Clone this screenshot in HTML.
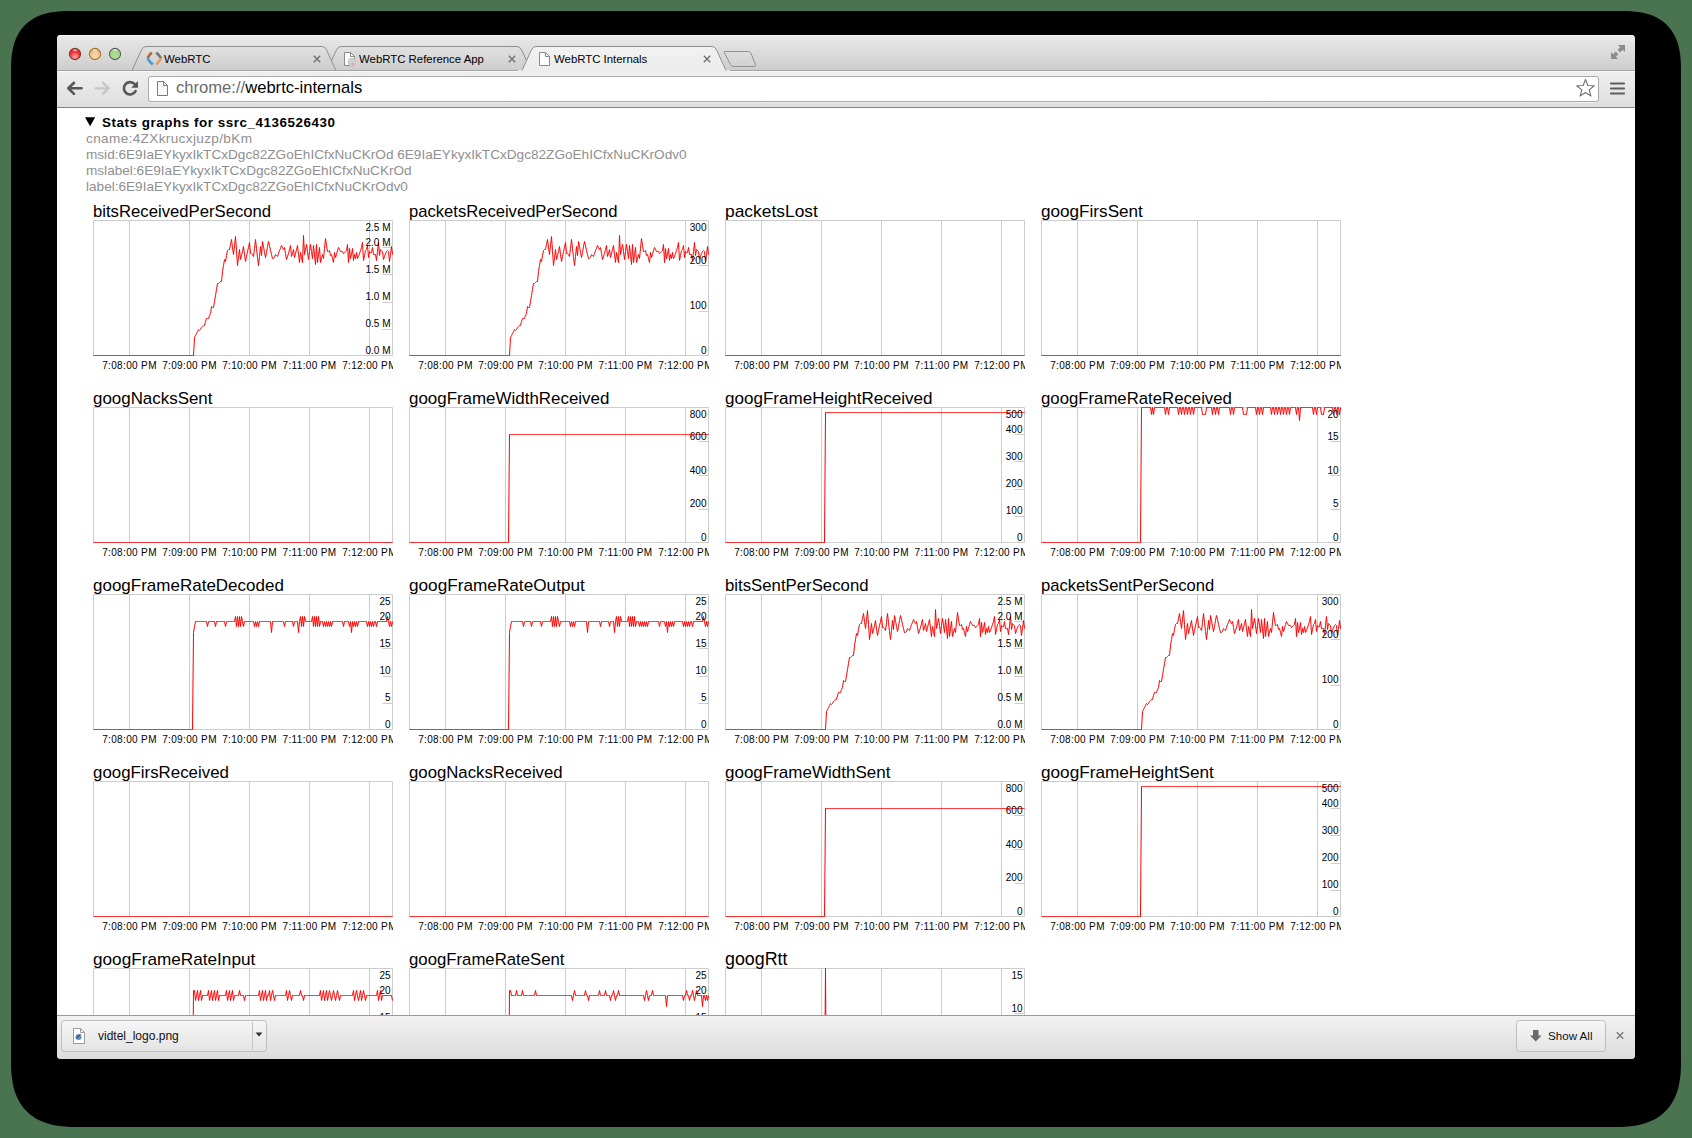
<!DOCTYPE html><html><head><meta charset="utf-8"><title>webrtc-internals</title><style>html,body{margin:0;padding:0}body{width:1692px;height:1138px;overflow:hidden;position:relative;background:#4a7450;font-family:"Liberation Sans",sans-serif}.abs{position:absolute}.t{position:absolute;white-space:nowrap;line-height:1}.gt{position:absolute;white-space:nowrap;font-size:16.5px;line-height:20px;color:#000}.gs{position:absolute;width:300px;height:150px}.gs svg{display:block}</style></head><body><svg class="abs" style="left:0;top:0" width="1692" height="1138"><path d="M1620.0,11.0 L1627.8,11.1 L1633.1,11.4 L1637.8,11.9 L1642.0,12.6 L1645.9,13.5 L1649.5,14.5 L1653.0,15.8 L1656.2,17.3 L1659.1,18.9 L1661.9,20.8 L1664.5,22.8 L1667.0,25.0 L1669.2,27.5 L1671.2,30.1 L1673.1,32.9 L1674.7,35.8 L1676.2,39.0 L1677.5,42.5 L1678.5,46.1 L1679.4,50.0 L1680.1,54.2 L1680.6,58.9 L1680.9,64.2 L1681.0,72.0 L1681.0,1059.0 L1680.9,1067.7 L1680.6,1073.6 L1680.0,1078.8 L1679.2,1083.5 L1678.3,1087.9 L1677.1,1091.9 L1675.6,1095.7 L1674.0,1099.3 L1672.2,1102.6 L1670.1,1105.8 L1667.8,1108.7 L1665.3,1111.3 L1662.7,1113.8 L1659.8,1116.1 L1656.6,1118.2 L1653.3,1120.0 L1649.7,1121.6 L1645.9,1123.1 L1641.9,1124.3 L1637.5,1125.2 L1632.8,1126.0 L1627.6,1126.6 L1621.7,1126.9 L1613.0,1127.0 L79.0,1127.0 L70.3,1126.9 L64.4,1126.6 L59.2,1126.0 L54.5,1125.2 L50.1,1124.3 L46.1,1123.1 L42.3,1121.6 L38.7,1120.0 L35.4,1118.2 L32.2,1116.1 L29.3,1113.8 L26.7,1111.3 L24.2,1108.7 L21.9,1105.8 L19.8,1102.6 L18.0,1099.3 L16.4,1095.7 L14.9,1091.9 L13.7,1087.9 L12.8,1083.5 L12.0,1078.8 L11.4,1073.6 L11.1,1067.7 L11.0,1059.0 L11.0,72.0 L11.1,64.2 L11.4,58.9 L11.9,54.2 L12.6,50.0 L13.5,46.1 L14.5,42.5 L15.8,39.0 L17.3,35.8 L18.9,32.9 L20.8,30.1 L22.8,27.5 L25.0,25.0 L27.5,22.8 L30.1,20.8 L32.9,18.9 L35.8,17.3 L39.0,15.8 L42.5,14.5 L46.1,13.5 L50.0,12.6 L54.2,11.9 L58.9,11.4 L64.2,11.1 L72.0,11.0Z" fill="#000"/></svg><div class="abs" style="left:57px;top:35px;width:1578px;height:1024px;border-radius:4px 4px 4px 4px;overflow:hidden;background:#fff"><div class="abs" style="left:0;top:0;width:1578px;height:36px;background:linear-gradient(#e9e9e9,#cdcdcd)"></div><div class="abs" style="left:0;top:0;width:1578px;height:1px;background:#f7f7f7"></div><div class="abs" style="left:0;top:36px;width:1578px;height:36px;background:linear-gradient(#efefef,#dedede)"></div><div class="abs" style="left:0;top:36px;width:1578px;height:1px;background:#f8f8f8"></div><div class="abs" style="left:0;top:72px;width:1578px;height:1px;background:#858585"></div><div class="abs" style="left:0;top:73px;width:1578px;height:907px;overflow:hidden;background:#fff"><svg class="abs" style="left:28px;top:9px" width="11" height="10"><path d="M0,0.2H10.2L5.1,9.3Z" fill="#000"/></svg><div class="t" style="left:45px;top:8px;font-size:13.4px;font-weight:bold;letter-spacing:0.55px;color:#000">Stats graphs for ssrc_4136526430</div><div class="t" style="left:29px;top:24px;font-size:13.6px;letter-spacing:0.35px;color:#8f8f8f">cname:4ZXkrucxjuzp/bKm</div><div class="t" style="left:29px;top:40px;font-size:13.6px;color:#8f8f8f">msid:6E9IaEYkyxIkTCxDgc82ZGoEhICfxNuCKrOd 6E9IaEYkyxIkTCxDgc82ZGoEhICfxNuCKrOdv0</div><div class="t" style="left:29px;top:56px;font-size:13.6px;color:#8f8f8f">mslabel:6E9IaEYkyxIkTCxDgc82ZGoEhICfxNuCKrOd</div><div class="t" style="left:29px;top:72px;font-size:13.6px;color:#8f8f8f">label:6E9IaEYkyxIkTCxDgc82ZGoEhICfxNuCKrOdv0</div><div class="gs" style="left:36px;top:112px"><svg width="300" height="150" viewBox="0 0 300 150"><rect width="300" height="150" fill="#fff"/><g font-family='"Liberation Sans", sans-serif' font-size="10" letter-spacing="0.35" fill="#000" text-anchor="middle"><text x="36.5" y="149">7:08:00 PM</text><text x="96.5" y="149">7:09:00 PM</text><text x="156.5" y="149">7:10:00 PM</text><text x="216.5" y="149">7:11:00 PM</text><text x="276.5" y="149">7:12:00 PM</text></g><path d="M36.5,0.5V135.5 M96.5,0.5V135.5 M156.5,0.5V135.5 M216.5,0.5V135.5 M276.5,0.5V135.5 M0.5,0.5H299.5V135.5H0.5Z M299.5,27.5H289.5 M299.5,54.5H289.5 M299.5,82.5H289.5 M299.5,109.5H289.5" fill="none" stroke="#ccc" stroke-width="1"/><polyline points="0.5,135.5 1.5,135.5 2.5,135.5 3.5,135.5 4.5,135.5 5.5,135.5 6.5,135.5 7.5,135.5 8.5,135.5 9.5,135.5 10.5,135.5 11.5,135.5 12.5,135.5 13.5,135.5 14.5,135.5 15.5,135.5 16.5,135.5 17.5,135.5 18.5,135.5 19.5,135.5 20.5,135.5 21.5,135.5 22.5,135.5 23.5,135.5 24.5,135.5 25.5,135.5 26.5,135.5 27.5,135.5 28.5,135.5 29.5,135.5 30.5,135.5 31.5,135.5 32.5,135.5 33.5,135.5 34.5,135.5 35.5,135.5 36.5,135.5 37.5,135.5 38.5,135.5 39.5,135.5 40.5,135.5 41.5,135.5 42.5,135.5 43.5,135.5 44.5,135.5 45.5,135.5 46.5,135.5 47.5,135.5 48.5,135.5 49.5,135.5 50.5,135.5 51.5,135.5 52.5,135.5 53.5,135.5 54.5,135.5 55.5,135.5 56.5,135.5 57.5,135.5 58.5,135.5 59.5,135.5 60.5,135.5 61.5,135.5 62.5,135.5 63.5,135.5 64.5,135.5 65.5,135.5 66.5,135.5 67.5,135.5 68.5,135.5 69.5,135.5 70.5,135.5 71.5,135.5 72.5,135.5 73.5,135.5 74.5,135.5 75.5,135.5 76.5,135.5 77.5,135.5 78.5,135.5 79.5,135.5 80.5,135.5 81.5,135.5 82.5,135.5 83.5,135.5 84.5,135.5 85.5,135.5 86.5,135.5 87.5,135.5 88.5,135.5 89.5,135.5 90.5,135.5 91.5,135.5 92.5,135.5 93.5,135.5 94.5,135.5 95.5,135.5 96.5,135.5 97.5,135.5 98.5,135.5 99.5,135.5 100.5,135.5 101.5,117.5 102.5,115.5 103.5,113.5 104.5,111.5 105.5,109.5 106.5,110.5 107.5,109.5 108.5,107.5 109.5,106.5 110.5,105.5 111.5,105.5 112.5,101.5 113.5,98.5 114.5,98.5 115.5,98.5 116.5,95.5 117.5,93.5 118.5,86.5 119.5,87.5 120.5,87.5 121.5,81.5 122.5,75.5 123.5,69.5 124.5,63.5 125.5,63.5 126.5,62.5 127.5,61.5 128.5,61.5 129.5,51.5 130.5,45.5 131.5,39.5 132.5,41.5 133.5,35.5 134.5,30.5 135.5,29.5 136.5,29.5 137.5,24.5 138.5,19.5 139.5,27.5 140.5,34.5 141.5,25.5 142.5,16.5 143.5,30.5 144.5,45.5 145.5,37.5 146.5,29.5 147.5,39.5 148.5,35.5 149.5,31.5 150.5,26.5 151.5,34.5 152.5,41.5 153.5,36.5 154.5,31.5 155.5,27.5 156.5,22.5 157.5,33.5 158.5,33.5 159.5,34.5 160.5,36.5 161.5,28.5 162.5,19.5 163.5,28.5 164.5,37.5 165.5,45.5 166.5,36.5 167.5,26.5 168.5,35.5 169.5,21.5 170.5,26.5 171.5,32.5 172.5,37.5 173.5,32.5 174.5,26.5 175.5,21.5 176.5,25.5 177.5,30.5 178.5,34.5 179.5,38.5 180.5,38.5 181.5,37.5 182.5,34.5 183.5,35.5 184.5,36.5 185.5,33.5 186.5,30.5 187.5,28.5 188.5,25.5 189.5,27.5 190.5,29.5 191.5,27.5 192.5,33.5 193.5,39.5 194.5,36.5 195.5,33.5 196.5,29.5 197.5,25.5 198.5,36.5 199.5,33.5 200.5,29.5 201.5,37.5 202.5,33.5 203.5,29.5 204.5,25.5 205.5,34.5 206.5,42.5 207.5,32.5 208.5,37.5 209.5,42.5 210.5,15.5 211.5,34.5 212.5,29.5 213.5,24.5 214.5,31.5 215.5,39.5 216.5,31.5 217.5,24.5 218.5,31.5 219.5,38.5 220.5,25.5 221.5,34.5 222.5,44.5 223.5,24.5 224.5,42.5 225.5,34.5 226.5,27.5 227.5,42.5 228.5,38.5 229.5,34.5 230.5,38.5 231.5,28.5 232.5,18.5 233.5,25.5 234.5,31.5 235.5,31.5 236.5,30.5 237.5,35.5 238.5,34.5 239.5,38.5 240.5,42.5 241.5,32.5 242.5,37.5 243.5,34.5 244.5,30.5 245.5,27.5 246.5,29.5 247.5,31.5 248.5,31.5 249.5,31.5 250.5,33.5 251.5,32.5 252.5,31.5 253.5,30.5 254.5,24.5 255.5,42.5 256.5,28.5 257.5,38.5 258.5,34.5 259.5,28.5 260.5,40.5 261.5,34.5 262.5,38.5 263.5,32.5 264.5,38.5 265.5,36.5 266.5,33.5 267.5,30.5 268.5,27.5 269.5,22.5 270.5,40.5 271.5,35.5 272.5,30.5 273.5,29.5 274.5,25.5 275.5,37.5 276.5,31.5 277.5,32.5 278.5,32.5 279.5,27.5 280.5,34.5 281.5,34.5 282.5,34.5 283.5,40.5 284.5,31.5 285.5,22.5 286.5,35.5 287.5,29.5 288.5,30.5 289.5,31.5 290.5,39.5 291.5,36.5 292.5,33.5 293.5,31.5 294.5,30.5 295.5,31.5 296.5,41.5 297.5,34.5 298.5,26.5 299.5,34.5" fill="none" stroke="#f00" stroke-width="1" stroke-linejoin="miter"/><g font-family='"Liberation Sans", sans-serif' font-size="10" fill="#000" text-anchor="end"><text x="297.5" y="11">2.5 M</text><text x="297.5" y="26.00">2.0 M</text><text x="297.5" y="53.00">1.5 M</text><text x="297.5" y="80.00">1.0 M</text><text x="297.5" y="107.00">0.5 M</text><text x="297.5" y="134.00">0.0 M</text></g></svg></div><div class="gs" style="left:352px;top:112px"><svg width="300" height="150" viewBox="0 0 300 150"><rect width="300" height="150" fill="#fff"/><g font-family='"Liberation Sans", sans-serif' font-size="10" letter-spacing="0.35" fill="#000" text-anchor="middle"><text x="36.5" y="149">7:08:00 PM</text><text x="96.5" y="149">7:09:00 PM</text><text x="156.5" y="149">7:10:00 PM</text><text x="216.5" y="149">7:11:00 PM</text><text x="276.5" y="149">7:12:00 PM</text></g><path d="M36.5,0.5V135.5 M96.5,0.5V135.5 M156.5,0.5V135.5 M216.5,0.5V135.5 M276.5,0.5V135.5 M0.5,0.5H299.5V135.5H0.5Z M299.5,45.5H289.5 M299.5,91.5H289.5" fill="none" stroke="#ccc" stroke-width="1"/><polyline points="0.5,135.5 1.5,135.5 2.5,135.5 3.5,135.5 4.5,135.5 5.5,135.5 6.5,135.5 7.5,135.5 8.5,135.5 9.5,135.5 10.5,135.5 11.5,135.5 12.5,135.5 13.5,135.5 14.5,135.5 15.5,135.5 16.5,135.5 17.5,135.5 18.5,135.5 19.5,135.5 20.5,135.5 21.5,135.5 22.5,135.5 23.5,135.5 24.5,135.5 25.5,135.5 26.5,135.5 27.5,135.5 28.5,135.5 29.5,135.5 30.5,135.5 31.5,135.5 32.5,135.5 33.5,135.5 34.5,135.5 35.5,135.5 36.5,135.5 37.5,135.5 38.5,135.5 39.5,135.5 40.5,135.5 41.5,135.5 42.5,135.5 43.5,135.5 44.5,135.5 45.5,135.5 46.5,135.5 47.5,135.5 48.5,135.5 49.5,135.5 50.5,135.5 51.5,135.5 52.5,135.5 53.5,135.5 54.5,135.5 55.5,135.5 56.5,135.5 57.5,135.5 58.5,135.5 59.5,135.5 60.5,135.5 61.5,135.5 62.5,135.5 63.5,135.5 64.5,135.5 65.5,135.5 66.5,135.5 67.5,135.5 68.5,135.5 69.5,135.5 70.5,135.5 71.5,135.5 72.5,135.5 73.5,135.5 74.5,135.5 75.5,135.5 76.5,135.5 77.5,135.5 78.5,135.5 79.5,135.5 80.5,135.5 81.5,135.5 82.5,135.5 83.5,135.5 84.5,135.5 85.5,135.5 86.5,135.5 87.5,135.5 88.5,135.5 89.5,135.5 90.5,135.5 91.5,135.5 92.5,135.5 93.5,135.5 94.5,135.5 95.5,135.5 96.5,135.5 97.5,135.5 98.5,135.5 99.5,135.5 100.5,135.5 101.5,117.5 102.5,115.5 103.5,113.5 104.5,111.5 105.5,109.5 106.5,110.5 107.5,109.5 108.5,107.5 109.5,106.5 110.5,105.5 111.5,105.5 112.5,101.5 113.5,98.5 114.5,98.5 115.5,98.5 116.5,95.5 117.5,93.5 118.5,86.5 119.5,87.5 120.5,87.5 121.5,81.5 122.5,75.5 123.5,69.5 124.5,63.5 125.5,63.5 126.5,62.5 127.5,61.5 128.5,61.5 129.5,51.5 130.5,45.5 131.5,39.5 132.5,41.5 133.5,35.5 134.5,30.5 135.5,29.5 136.5,29.5 137.5,24.5 138.5,19.5 139.5,27.5 140.5,34.5 141.5,25.5 142.5,16.5 143.5,30.5 144.5,45.5 145.5,37.5 146.5,29.5 147.5,39.5 148.5,35.5 149.5,31.5 150.5,26.5 151.5,34.5 152.5,41.5 153.5,36.5 154.5,31.5 155.5,27.5 156.5,22.5 157.5,33.5 158.5,33.5 159.5,34.5 160.5,36.5 161.5,28.5 162.5,19.5 163.5,28.5 164.5,37.5 165.5,45.5 166.5,36.5 167.5,26.5 168.5,35.5 169.5,21.5 170.5,26.5 171.5,32.5 172.5,37.5 173.5,32.5 174.5,26.5 175.5,21.5 176.5,25.5 177.5,30.5 178.5,34.5 179.5,38.5 180.5,38.5 181.5,37.5 182.5,34.5 183.5,35.5 184.5,36.5 185.5,33.5 186.5,30.5 187.5,28.5 188.5,25.5 189.5,27.5 190.5,29.5 191.5,27.5 192.5,33.5 193.5,39.5 194.5,36.5 195.5,33.5 196.5,29.5 197.5,25.5 198.5,36.5 199.5,33.5 200.5,29.5 201.5,37.5 202.5,33.5 203.5,29.5 204.5,25.5 205.5,34.5 206.5,42.5 207.5,32.5 208.5,37.5 209.5,42.5 210.5,15.5 211.5,34.5 212.5,29.5 213.5,24.5 214.5,31.5 215.5,39.5 216.5,31.5 217.5,24.5 218.5,31.5 219.5,38.5 220.5,25.5 221.5,34.5 222.5,44.5 223.5,24.5 224.5,42.5 225.5,34.5 226.5,27.5 227.5,42.5 228.5,38.5 229.5,34.5 230.5,38.5 231.5,28.5 232.5,18.5 233.5,25.5 234.5,31.5 235.5,31.5 236.5,30.5 237.5,35.5 238.5,34.5 239.5,38.5 240.5,42.5 241.5,32.5 242.5,37.5 243.5,34.5 244.5,30.5 245.5,27.5 246.5,29.5 247.5,31.5 248.5,31.5 249.5,31.5 250.5,33.5 251.5,32.5 252.5,31.5 253.5,30.5 254.5,24.5 255.5,42.5 256.5,28.5 257.5,38.5 258.5,34.5 259.5,28.5 260.5,40.5 261.5,34.5 262.5,38.5 263.5,32.5 264.5,38.5 265.5,36.5 266.5,33.5 267.5,30.5 268.5,27.5 269.5,22.5 270.5,40.5 271.5,35.5 272.5,30.5 273.5,29.5 274.5,25.5 275.5,37.5 276.5,31.5 277.5,32.5 278.5,32.5 279.5,27.5 280.5,34.5 281.5,34.5 282.5,34.5 283.5,40.5 284.5,31.5 285.5,22.5 286.5,35.5 287.5,29.5 288.5,30.5 289.5,31.5 290.5,39.5 291.5,36.5 292.5,33.5 293.5,31.5 294.5,30.5 295.5,31.5 296.5,41.5 297.5,34.5 298.5,26.5 299.5,34.5" fill="none" stroke="#f00" stroke-width="1" stroke-linejoin="miter"/><g font-family='"Liberation Sans", sans-serif' font-size="10" fill="#000" text-anchor="end"><text x="297.5" y="11">300</text><text x="297.5" y="44.00">200</text><text x="297.5" y="89.00">100</text><text x="297.5" y="134.00">0</text></g></svg></div><div class="gs" style="left:668px;top:112px"><svg width="300" height="150" viewBox="0 0 300 150"><rect width="300" height="150" fill="#fff"/><g font-family='"Liberation Sans", sans-serif' font-size="10" letter-spacing="0.35" fill="#000" text-anchor="middle"><text x="36.5" y="149">7:08:00 PM</text><text x="96.5" y="149">7:09:00 PM</text><text x="156.5" y="149">7:10:00 PM</text><text x="216.5" y="149">7:11:00 PM</text><text x="276.5" y="149">7:12:00 PM</text></g><path d="M36.5,0.5V135.5 M96.5,0.5V135.5 M156.5,0.5V135.5 M216.5,0.5V135.5 M276.5,0.5V135.5 M0.5,0.5H299.5V135.5H0.5Z" fill="none" stroke="#ccc" stroke-width="1"/><polyline points="0.5,135.5 1.5,135.5 2.5,135.5 3.5,135.5 4.5,135.5 5.5,135.5 6.5,135.5 7.5,135.5 8.5,135.5 9.5,135.5 10.5,135.5 11.5,135.5 12.5,135.5 13.5,135.5 14.5,135.5 15.5,135.5 16.5,135.5 17.5,135.5 18.5,135.5 19.5,135.5 20.5,135.5 21.5,135.5 22.5,135.5 23.5,135.5 24.5,135.5 25.5,135.5 26.5,135.5 27.5,135.5 28.5,135.5 29.5,135.5 30.5,135.5 31.5,135.5 32.5,135.5 33.5,135.5 34.5,135.5 35.5,135.5 36.5,135.5 37.5,135.5 38.5,135.5 39.5,135.5 40.5,135.5 41.5,135.5 42.5,135.5 43.5,135.5 44.5,135.5 45.5,135.5 46.5,135.5 47.5,135.5 48.5,135.5 49.5,135.5 50.5,135.5 51.5,135.5 52.5,135.5 53.5,135.5 54.5,135.5 55.5,135.5 56.5,135.5 57.5,135.5 58.5,135.5 59.5,135.5 60.5,135.5 61.5,135.5 62.5,135.5 63.5,135.5 64.5,135.5 65.5,135.5 66.5,135.5 67.5,135.5 68.5,135.5 69.5,135.5 70.5,135.5 71.5,135.5 72.5,135.5 73.5,135.5 74.5,135.5 75.5,135.5 76.5,135.5 77.5,135.5 78.5,135.5 79.5,135.5 80.5,135.5 81.5,135.5 82.5,135.5 83.5,135.5 84.5,135.5 85.5,135.5 86.5,135.5 87.5,135.5 88.5,135.5 89.5,135.5 90.5,135.5 91.5,135.5 92.5,135.5 93.5,135.5 94.5,135.5 95.5,135.5 96.5,135.5 97.5,135.5 98.5,135.5 99.5,135.5 100.5,135.5 101.5,135.5 102.5,135.5 103.5,135.5 104.5,135.5 105.5,135.5 106.5,135.5 107.5,135.5 108.5,135.5 109.5,135.5 110.5,135.5 111.5,135.5 112.5,135.5 113.5,135.5 114.5,135.5 115.5,135.5 116.5,135.5 117.5,135.5 118.5,135.5 119.5,135.5 120.5,135.5 121.5,135.5 122.5,135.5 123.5,135.5 124.5,135.5 125.5,135.5 126.5,135.5 127.5,135.5 128.5,135.5 129.5,135.5 130.5,135.5 131.5,135.5 132.5,135.5 133.5,135.5 134.5,135.5 135.5,135.5 136.5,135.5 137.5,135.5 138.5,135.5 139.5,135.5 140.5,135.5 141.5,135.5 142.5,135.5 143.5,135.5 144.5,135.5 145.5,135.5 146.5,135.5 147.5,135.5 148.5,135.5 149.5,135.5 150.5,135.5 151.5,135.5 152.5,135.5 153.5,135.5 154.5,135.5 155.5,135.5 156.5,135.5 157.5,135.5 158.5,135.5 159.5,135.5 160.5,135.5 161.5,135.5 162.5,135.5 163.5,135.5 164.5,135.5 165.5,135.5 166.5,135.5 167.5,135.5 168.5,135.5 169.5,135.5 170.5,135.5 171.5,135.5 172.5,135.5 173.5,135.5 174.5,135.5 175.5,135.5 176.5,135.5 177.5,135.5 178.5,135.5 179.5,135.5 180.5,135.5 181.5,135.5 182.5,135.5 183.5,135.5 184.5,135.5 185.5,135.5 186.5,135.5 187.5,135.5 188.5,135.5 189.5,135.5 190.5,135.5 191.5,135.5 192.5,135.5 193.5,135.5 194.5,135.5 195.5,135.5 196.5,135.5 197.5,135.5 198.5,135.5 199.5,135.5 200.5,135.5 201.5,135.5 202.5,135.5 203.5,135.5 204.5,135.5 205.5,135.5 206.5,135.5 207.5,135.5 208.5,135.5 209.5,135.5 210.5,135.5 211.5,135.5 212.5,135.5 213.5,135.5 214.5,135.5 215.5,135.5 216.5,135.5 217.5,135.5 218.5,135.5 219.5,135.5 220.5,135.5 221.5,135.5 222.5,135.5 223.5,135.5 224.5,135.5 225.5,135.5 226.5,135.5 227.5,135.5 228.5,135.5 229.5,135.5 230.5,135.5 231.5,135.5 232.5,135.5 233.5,135.5 234.5,135.5 235.5,135.5 236.5,135.5 237.5,135.5 238.5,135.5 239.5,135.5 240.5,135.5 241.5,135.5 242.5,135.5 243.5,135.5 244.5,135.5 245.5,135.5 246.5,135.5 247.5,135.5 248.5,135.5 249.5,135.5 250.5,135.5 251.5,135.5 252.5,135.5 253.5,135.5 254.5,135.5 255.5,135.5 256.5,135.5 257.5,135.5 258.5,135.5 259.5,135.5 260.5,135.5 261.5,135.5 262.5,135.5 263.5,135.5 264.5,135.5 265.5,135.5 266.5,135.5 267.5,135.5 268.5,135.5 269.5,135.5 270.5,135.5 271.5,135.5 272.5,135.5 273.5,135.5 274.5,135.5 275.5,135.5 276.5,135.5 277.5,135.5 278.5,135.5 279.5,135.5 280.5,135.5 281.5,135.5 282.5,135.5 283.5,135.5 284.5,135.5 285.5,135.5 286.5,135.5 287.5,135.5 288.5,135.5 289.5,135.5 290.5,135.5 291.5,135.5 292.5,135.5 293.5,135.5 294.5,135.5 295.5,135.5 296.5,135.5 297.5,135.5 298.5,135.5 299.5,135.5" fill="none" stroke="#f00" stroke-width="1" stroke-linejoin="miter"/></svg></div><div class="gs" style="left:984px;top:112px"><svg width="300" height="150" viewBox="0 0 300 150"><rect width="300" height="150" fill="#fff"/><g font-family='"Liberation Sans", sans-serif' font-size="10" letter-spacing="0.35" fill="#000" text-anchor="middle"><text x="36.5" y="149">7:08:00 PM</text><text x="96.5" y="149">7:09:00 PM</text><text x="156.5" y="149">7:10:00 PM</text><text x="216.5" y="149">7:11:00 PM</text><text x="276.5" y="149">7:12:00 PM</text></g><path d="M36.5,0.5V135.5 M96.5,0.5V135.5 M156.5,0.5V135.5 M216.5,0.5V135.5 M276.5,0.5V135.5 M0.5,0.5H299.5V135.5H0.5Z" fill="none" stroke="#ccc" stroke-width="1"/><polyline points="0.5,135.5 1.5,135.5 2.5,135.5 3.5,135.5 4.5,135.5 5.5,135.5 6.5,135.5 7.5,135.5 8.5,135.5 9.5,135.5 10.5,135.5 11.5,135.5 12.5,135.5 13.5,135.5 14.5,135.5 15.5,135.5 16.5,135.5 17.5,135.5 18.5,135.5 19.5,135.5 20.5,135.5 21.5,135.5 22.5,135.5 23.5,135.5 24.5,135.5 25.5,135.5 26.5,135.5 27.5,135.5 28.5,135.5 29.5,135.5 30.5,135.5 31.5,135.5 32.5,135.5 33.5,135.5 34.5,135.5 35.5,135.5 36.5,135.5 37.5,135.5 38.5,135.5 39.5,135.5 40.5,135.5 41.5,135.5 42.5,135.5 43.5,135.5 44.5,135.5 45.5,135.5 46.5,135.5 47.5,135.5 48.5,135.5 49.5,135.5 50.5,135.5 51.5,135.5 52.5,135.5 53.5,135.5 54.5,135.5 55.5,135.5 56.5,135.5 57.5,135.5 58.5,135.5 59.5,135.5 60.5,135.5 61.5,135.5 62.5,135.5 63.5,135.5 64.5,135.5 65.5,135.5 66.5,135.5 67.5,135.5 68.5,135.5 69.5,135.5 70.5,135.5 71.5,135.5 72.5,135.5 73.5,135.5 74.5,135.5 75.5,135.5 76.5,135.5 77.5,135.5 78.5,135.5 79.5,135.5 80.5,135.5 81.5,135.5 82.5,135.5 83.5,135.5 84.5,135.5 85.5,135.5 86.5,135.5 87.5,135.5 88.5,135.5 89.5,135.5 90.5,135.5 91.5,135.5 92.5,135.5 93.5,135.5 94.5,135.5 95.5,135.5 96.5,135.5 97.5,135.5 98.5,135.5 99.5,135.5 100.5,135.5 101.5,135.5 102.5,135.5 103.5,135.5 104.5,135.5 105.5,135.5 106.5,135.5 107.5,135.5 108.5,135.5 109.5,135.5 110.5,135.5 111.5,135.5 112.5,135.5 113.5,135.5 114.5,135.5 115.5,135.5 116.5,135.5 117.5,135.5 118.5,135.5 119.5,135.5 120.5,135.5 121.5,135.5 122.5,135.5 123.5,135.5 124.5,135.5 125.5,135.5 126.5,135.5 127.5,135.5 128.5,135.5 129.5,135.5 130.5,135.5 131.5,135.5 132.5,135.5 133.5,135.5 134.5,135.5 135.5,135.5 136.5,135.5 137.5,135.5 138.5,135.5 139.5,135.5 140.5,135.5 141.5,135.5 142.5,135.5 143.5,135.5 144.5,135.5 145.5,135.5 146.5,135.5 147.5,135.5 148.5,135.5 149.5,135.5 150.5,135.5 151.5,135.5 152.5,135.5 153.5,135.5 154.5,135.5 155.5,135.5 156.5,135.5 157.5,135.5 158.5,135.5 159.5,135.5 160.5,135.5 161.5,135.5 162.5,135.5 163.5,135.5 164.5,135.5 165.5,135.5 166.5,135.5 167.5,135.5 168.5,135.5 169.5,135.5 170.5,135.5 171.5,135.5 172.5,135.5 173.5,135.5 174.5,135.5 175.5,135.5 176.5,135.5 177.5,135.5 178.5,135.5 179.5,135.5 180.5,135.5 181.5,135.5 182.5,135.5 183.5,135.5 184.5,135.5 185.5,135.5 186.5,135.5 187.5,135.5 188.5,135.5 189.5,135.5 190.5,135.5 191.5,135.5 192.5,135.5 193.5,135.5 194.5,135.5 195.5,135.5 196.5,135.5 197.5,135.5 198.5,135.5 199.5,135.5 200.5,135.5 201.5,135.5 202.5,135.5 203.5,135.5 204.5,135.5 205.5,135.5 206.5,135.5 207.5,135.5 208.5,135.5 209.5,135.5 210.5,135.5 211.5,135.5 212.5,135.5 213.5,135.5 214.5,135.5 215.5,135.5 216.5,135.5 217.5,135.5 218.5,135.5 219.5,135.5 220.5,135.5 221.5,135.5 222.5,135.5 223.5,135.5 224.5,135.5 225.5,135.5 226.5,135.5 227.5,135.5 228.5,135.5 229.5,135.5 230.5,135.5 231.5,135.5 232.5,135.5 233.5,135.5 234.5,135.5 235.5,135.5 236.5,135.5 237.5,135.5 238.5,135.5 239.5,135.5 240.5,135.5 241.5,135.5 242.5,135.5 243.5,135.5 244.5,135.5 245.5,135.5 246.5,135.5 247.5,135.5 248.5,135.5 249.5,135.5 250.5,135.5 251.5,135.5 252.5,135.5 253.5,135.5 254.5,135.5 255.5,135.5 256.5,135.5 257.5,135.5 258.5,135.5 259.5,135.5 260.5,135.5 261.5,135.5 262.5,135.5 263.5,135.5 264.5,135.5 265.5,135.5 266.5,135.5 267.5,135.5 268.5,135.5 269.5,135.5 270.5,135.5 271.5,135.5 272.5,135.5 273.5,135.5 274.5,135.5 275.5,135.5 276.5,135.5 277.5,135.5 278.5,135.5 279.5,135.5 280.5,135.5 281.5,135.5 282.5,135.5 283.5,135.5 284.5,135.5 285.5,135.5 286.5,135.5 287.5,135.5 288.5,135.5 289.5,135.5 290.5,135.5 291.5,135.5 292.5,135.5 293.5,135.5 294.5,135.5 295.5,135.5 296.5,135.5 297.5,135.5 298.5,135.5 299.5,135.5" fill="none" stroke="#f00" stroke-width="1" stroke-linejoin="miter"/></svg></div><div class="gs" style="left:36px;top:299px"><svg width="300" height="150" viewBox="0 0 300 150"><rect width="300" height="150" fill="#fff"/><g font-family='"Liberation Sans", sans-serif' font-size="10" letter-spacing="0.35" fill="#000" text-anchor="middle"><text x="36.5" y="149">7:08:00 PM</text><text x="96.5" y="149">7:09:00 PM</text><text x="156.5" y="149">7:10:00 PM</text><text x="216.5" y="149">7:11:00 PM</text><text x="276.5" y="149">7:12:00 PM</text></g><path d="M36.5,0.5V135.5 M96.5,0.5V135.5 M156.5,0.5V135.5 M216.5,0.5V135.5 M276.5,0.5V135.5 M0.5,0.5H299.5V135.5H0.5Z" fill="none" stroke="#ccc" stroke-width="1"/><polyline points="0.5,135.5 1.5,135.5 2.5,135.5 3.5,135.5 4.5,135.5 5.5,135.5 6.5,135.5 7.5,135.5 8.5,135.5 9.5,135.5 10.5,135.5 11.5,135.5 12.5,135.5 13.5,135.5 14.5,135.5 15.5,135.5 16.5,135.5 17.5,135.5 18.5,135.5 19.5,135.5 20.5,135.5 21.5,135.5 22.5,135.5 23.5,135.5 24.5,135.5 25.5,135.5 26.5,135.5 27.5,135.5 28.5,135.5 29.5,135.5 30.5,135.5 31.5,135.5 32.5,135.5 33.5,135.5 34.5,135.5 35.5,135.5 36.5,135.5 37.5,135.5 38.5,135.5 39.5,135.5 40.5,135.5 41.5,135.5 42.5,135.5 43.5,135.5 44.5,135.5 45.5,135.5 46.5,135.5 47.5,135.5 48.5,135.5 49.5,135.5 50.5,135.5 51.5,135.5 52.5,135.5 53.5,135.5 54.5,135.5 55.5,135.5 56.5,135.5 57.5,135.5 58.5,135.5 59.5,135.5 60.5,135.5 61.5,135.5 62.5,135.5 63.5,135.5 64.5,135.5 65.5,135.5 66.5,135.5 67.5,135.5 68.5,135.5 69.5,135.5 70.5,135.5 71.5,135.5 72.5,135.5 73.5,135.5 74.5,135.5 75.5,135.5 76.5,135.5 77.5,135.5 78.5,135.5 79.5,135.5 80.5,135.5 81.5,135.5 82.5,135.5 83.5,135.5 84.5,135.5 85.5,135.5 86.5,135.5 87.5,135.5 88.5,135.5 89.5,135.5 90.5,135.5 91.5,135.5 92.5,135.5 93.5,135.5 94.5,135.5 95.5,135.5 96.5,135.5 97.5,135.5 98.5,135.5 99.5,135.5 100.5,135.5 101.5,135.5 102.5,135.5 103.5,135.5 104.5,135.5 105.5,135.5 106.5,135.5 107.5,135.5 108.5,135.5 109.5,135.5 110.5,135.5 111.5,135.5 112.5,135.5 113.5,135.5 114.5,135.5 115.5,135.5 116.5,135.5 117.5,135.5 118.5,135.5 119.5,135.5 120.5,135.5 121.5,135.5 122.5,135.5 123.5,135.5 124.5,135.5 125.5,135.5 126.5,135.5 127.5,135.5 128.5,135.5 129.5,135.5 130.5,135.5 131.5,135.5 132.5,135.5 133.5,135.5 134.5,135.5 135.5,135.5 136.5,135.5 137.5,135.5 138.5,135.5 139.5,135.5 140.5,135.5 141.5,135.5 142.5,135.5 143.5,135.5 144.5,135.5 145.5,135.5 146.5,135.5 147.5,135.5 148.5,135.5 149.5,135.5 150.5,135.5 151.5,135.5 152.5,135.5 153.5,135.5 154.5,135.5 155.5,135.5 156.5,135.5 157.5,135.5 158.5,135.5 159.5,135.5 160.5,135.5 161.5,135.5 162.5,135.5 163.5,135.5 164.5,135.5 165.5,135.5 166.5,135.5 167.5,135.5 168.5,135.5 169.5,135.5 170.5,135.5 171.5,135.5 172.5,135.5 173.5,135.5 174.5,135.5 175.5,135.5 176.5,135.5 177.5,135.5 178.5,135.5 179.5,135.5 180.5,135.5 181.5,135.5 182.5,135.5 183.5,135.5 184.5,135.5 185.5,135.5 186.5,135.5 187.5,135.5 188.5,135.5 189.5,135.5 190.5,135.5 191.5,135.5 192.5,135.5 193.5,135.5 194.5,135.5 195.5,135.5 196.5,135.5 197.5,135.5 198.5,135.5 199.5,135.5 200.5,135.5 201.5,135.5 202.5,135.5 203.5,135.5 204.5,135.5 205.5,135.5 206.5,135.5 207.5,135.5 208.5,135.5 209.5,135.5 210.5,135.5 211.5,135.5 212.5,135.5 213.5,135.5 214.5,135.5 215.5,135.5 216.5,135.5 217.5,135.5 218.5,135.5 219.5,135.5 220.5,135.5 221.5,135.5 222.5,135.5 223.5,135.5 224.5,135.5 225.5,135.5 226.5,135.5 227.5,135.5 228.5,135.5 229.5,135.5 230.5,135.5 231.5,135.5 232.5,135.5 233.5,135.5 234.5,135.5 235.5,135.5 236.5,135.5 237.5,135.5 238.5,135.5 239.5,135.5 240.5,135.5 241.5,135.5 242.5,135.5 243.5,135.5 244.5,135.5 245.5,135.5 246.5,135.5 247.5,135.5 248.5,135.5 249.5,135.5 250.5,135.5 251.5,135.5 252.5,135.5 253.5,135.5 254.5,135.5 255.5,135.5 256.5,135.5 257.5,135.5 258.5,135.5 259.5,135.5 260.5,135.5 261.5,135.5 262.5,135.5 263.5,135.5 264.5,135.5 265.5,135.5 266.5,135.5 267.5,135.5 268.5,135.5 269.5,135.5 270.5,135.5 271.5,135.5 272.5,135.5 273.5,135.5 274.5,135.5 275.5,135.5 276.5,135.5 277.5,135.5 278.5,135.5 279.5,135.5 280.5,135.5 281.5,135.5 282.5,135.5 283.5,135.5 284.5,135.5 285.5,135.5 286.5,135.5 287.5,135.5 288.5,135.5 289.5,135.5 290.5,135.5 291.5,135.5 292.5,135.5 293.5,135.5 294.5,135.5 295.5,135.5 296.5,135.5 297.5,135.5 298.5,135.5 299.5,135.5" fill="none" stroke="#f00" stroke-width="1" stroke-linejoin="miter"/></svg></div><div class="gs" style="left:352px;top:299px"><svg width="300" height="150" viewBox="0 0 300 150"><rect width="300" height="150" fill="#fff"/><g font-family='"Liberation Sans", sans-serif' font-size="10" letter-spacing="0.35" fill="#000" text-anchor="middle"><text x="36.5" y="149">7:08:00 PM</text><text x="96.5" y="149">7:09:00 PM</text><text x="156.5" y="149">7:10:00 PM</text><text x="216.5" y="149">7:11:00 PM</text><text x="276.5" y="149">7:12:00 PM</text></g><path d="M36.5,0.5V135.5 M96.5,0.5V135.5 M156.5,0.5V135.5 M216.5,0.5V135.5 M276.5,0.5V135.5 M0.5,0.5H299.5V135.5H0.5Z M299.5,34.5H289.5 M299.5,68.5H289.5 M299.5,102.5H289.5" fill="none" stroke="#ccc" stroke-width="1"/><polyline points="0.5,135.5 1.5,135.5 2.5,135.5 3.5,135.5 4.5,135.5 5.5,135.5 6.5,135.5 7.5,135.5 8.5,135.5 9.5,135.5 10.5,135.5 11.5,135.5 12.5,135.5 13.5,135.5 14.5,135.5 15.5,135.5 16.5,135.5 17.5,135.5 18.5,135.5 19.5,135.5 20.5,135.5 21.5,135.5 22.5,135.5 23.5,135.5 24.5,135.5 25.5,135.5 26.5,135.5 27.5,135.5 28.5,135.5 29.5,135.5 30.5,135.5 31.5,135.5 32.5,135.5 33.5,135.5 34.5,135.5 35.5,135.5 36.5,135.5 37.5,135.5 38.5,135.5 39.5,135.5 40.5,135.5 41.5,135.5 42.5,135.5 43.5,135.5 44.5,135.5 45.5,135.5 46.5,135.5 47.5,135.5 48.5,135.5 49.5,135.5 50.5,135.5 51.5,135.5 52.5,135.5 53.5,135.5 54.5,135.5 55.5,135.5 56.5,135.5 57.5,135.5 58.5,135.5 59.5,135.5 60.5,135.5 61.5,135.5 62.5,135.5 63.5,135.5 64.5,135.5 65.5,135.5 66.5,135.5 67.5,135.5 68.5,135.5 69.5,135.5 70.5,135.5 71.5,135.5 72.5,135.5 73.5,135.5 74.5,135.5 75.5,135.5 76.5,135.5 77.5,135.5 78.5,135.5 79.5,135.5 80.5,135.5 81.5,135.5 82.5,135.5 83.5,135.5 84.5,135.5 85.5,135.5 86.5,135.5 87.5,135.5 88.5,135.5 89.5,135.5 90.5,135.5 91.5,135.5 92.5,135.5 93.5,135.5 94.5,135.5 95.5,135.5 96.5,135.5 97.5,135.5 98.5,135.5 99.5,135.5 100.5,27.5 101.5,27.5 102.5,27.5 103.5,27.5 104.5,27.5 105.5,27.5 106.5,27.5 107.5,27.5 108.5,27.5 109.5,27.5 110.5,27.5 111.5,27.5 112.5,27.5 113.5,27.5 114.5,27.5 115.5,27.5 116.5,27.5 117.5,27.5 118.5,27.5 119.5,27.5 120.5,27.5 121.5,27.5 122.5,27.5 123.5,27.5 124.5,27.5 125.5,27.5 126.5,27.5 127.5,27.5 128.5,27.5 129.5,27.5 130.5,27.5 131.5,27.5 132.5,27.5 133.5,27.5 134.5,27.5 135.5,27.5 136.5,27.5 137.5,27.5 138.5,27.5 139.5,27.5 140.5,27.5 141.5,27.5 142.5,27.5 143.5,27.5 144.5,27.5 145.5,27.5 146.5,27.5 147.5,27.5 148.5,27.5 149.5,27.5 150.5,27.5 151.5,27.5 152.5,27.5 153.5,27.5 154.5,27.5 155.5,27.5 156.5,27.5 157.5,27.5 158.5,27.5 159.5,27.5 160.5,27.5 161.5,27.5 162.5,27.5 163.5,27.5 164.5,27.5 165.5,27.5 166.5,27.5 167.5,27.5 168.5,27.5 169.5,27.5 170.5,27.5 171.5,27.5 172.5,27.5 173.5,27.5 174.5,27.5 175.5,27.5 176.5,27.5 177.5,27.5 178.5,27.5 179.5,27.5 180.5,27.5 181.5,27.5 182.5,27.5 183.5,27.5 184.5,27.5 185.5,27.5 186.5,27.5 187.5,27.5 188.5,27.5 189.5,27.5 190.5,27.5 191.5,27.5 192.5,27.5 193.5,27.5 194.5,27.5 195.5,27.5 196.5,27.5 197.5,27.5 198.5,27.5 199.5,27.5 200.5,27.5 201.5,27.5 202.5,27.5 203.5,27.5 204.5,27.5 205.5,27.5 206.5,27.5 207.5,27.5 208.5,27.5 209.5,27.5 210.5,27.5 211.5,27.5 212.5,27.5 213.5,27.5 214.5,27.5 215.5,27.5 216.5,27.5 217.5,27.5 218.5,27.5 219.5,27.5 220.5,27.5 221.5,27.5 222.5,27.5 223.5,27.5 224.5,27.5 225.5,27.5 226.5,27.5 227.5,27.5 228.5,27.5 229.5,27.5 230.5,27.5 231.5,27.5 232.5,27.5 233.5,27.5 234.5,27.5 235.5,27.5 236.5,27.5 237.5,27.5 238.5,27.5 239.5,27.5 240.5,27.5 241.5,27.5 242.5,27.5 243.5,27.5 244.5,27.5 245.5,27.5 246.5,27.5 247.5,27.5 248.5,27.5 249.5,27.5 250.5,27.5 251.5,27.5 252.5,27.5 253.5,27.5 254.5,27.5 255.5,27.5 256.5,27.5 257.5,27.5 258.5,27.5 259.5,27.5 260.5,27.5 261.5,27.5 262.5,27.5 263.5,27.5 264.5,27.5 265.5,27.5 266.5,27.5 267.5,27.5 268.5,27.5 269.5,27.5 270.5,27.5 271.5,27.5 272.5,27.5 273.5,27.5 274.5,27.5 275.5,27.5 276.5,27.5 277.5,27.5 278.5,27.5 279.5,27.5 280.5,27.5 281.5,27.5 282.5,27.5 283.5,27.5 284.5,27.5 285.5,27.5 286.5,27.5 287.5,27.5 288.5,27.5 289.5,27.5 290.5,27.5 291.5,27.5 292.5,27.5 293.5,27.5 294.5,27.5 295.5,27.5 296.5,27.5 297.5,27.5 298.5,27.5 299.5,27.5" fill="none" stroke="#f00" stroke-width="1" stroke-linejoin="miter"/><g font-family='"Liberation Sans", sans-serif' font-size="10" fill="#000" text-anchor="end"><text x="297.5" y="11">800</text><text x="297.5" y="32.75">600</text><text x="297.5" y="66.50">400</text><text x="297.5" y="100.25">200</text><text x="297.5" y="134.00">0</text></g></svg></div><div class="gs" style="left:668px;top:299px"><svg width="300" height="150" viewBox="0 0 300 150"><rect width="300" height="150" fill="#fff"/><g font-family='"Liberation Sans", sans-serif' font-size="10" letter-spacing="0.35" fill="#000" text-anchor="middle"><text x="36.5" y="149">7:08:00 PM</text><text x="96.5" y="149">7:09:00 PM</text><text x="156.5" y="149">7:10:00 PM</text><text x="216.5" y="149">7:11:00 PM</text><text x="276.5" y="149">7:12:00 PM</text></g><path d="M36.5,0.5V135.5 M96.5,0.5V135.5 M156.5,0.5V135.5 M216.5,0.5V135.5 M276.5,0.5V135.5 M0.5,0.5H299.5V135.5H0.5Z M299.5,27.5H289.5 M299.5,54.5H289.5 M299.5,82.5H289.5 M299.5,109.5H289.5" fill="none" stroke="#ccc" stroke-width="1"/><polyline points="0.5,135.5 1.5,135.5 2.5,135.5 3.5,135.5 4.5,135.5 5.5,135.5 6.5,135.5 7.5,135.5 8.5,135.5 9.5,135.5 10.5,135.5 11.5,135.5 12.5,135.5 13.5,135.5 14.5,135.5 15.5,135.5 16.5,135.5 17.5,135.5 18.5,135.5 19.5,135.5 20.5,135.5 21.5,135.5 22.5,135.5 23.5,135.5 24.5,135.5 25.5,135.5 26.5,135.5 27.5,135.5 28.5,135.5 29.5,135.5 30.5,135.5 31.5,135.5 32.5,135.5 33.5,135.5 34.5,135.5 35.5,135.5 36.5,135.5 37.5,135.5 38.5,135.5 39.5,135.5 40.5,135.5 41.5,135.5 42.5,135.5 43.5,135.5 44.5,135.5 45.5,135.5 46.5,135.5 47.5,135.5 48.5,135.5 49.5,135.5 50.5,135.5 51.5,135.5 52.5,135.5 53.5,135.5 54.5,135.5 55.5,135.5 56.5,135.5 57.5,135.5 58.5,135.5 59.5,135.5 60.5,135.5 61.5,135.5 62.5,135.5 63.5,135.5 64.5,135.5 65.5,135.5 66.5,135.5 67.5,135.5 68.5,135.5 69.5,135.5 70.5,135.5 71.5,135.5 72.5,135.5 73.5,135.5 74.5,135.5 75.5,135.5 76.5,135.5 77.5,135.5 78.5,135.5 79.5,135.5 80.5,135.5 81.5,135.5 82.5,135.5 83.5,135.5 84.5,135.5 85.5,135.5 86.5,135.5 87.5,135.5 88.5,135.5 89.5,135.5 90.5,135.5 91.5,135.5 92.5,135.5 93.5,135.5 94.5,135.5 95.5,135.5 96.5,135.5 97.5,135.5 98.5,135.5 99.5,135.5 100.5,5.5 101.5,5.5 102.5,5.5 103.5,5.5 104.5,5.5 105.5,5.5 106.5,5.5 107.5,5.5 108.5,5.5 109.5,5.5 110.5,5.5 111.5,5.5 112.5,5.5 113.5,5.5 114.5,5.5 115.5,5.5 116.5,5.5 117.5,5.5 118.5,5.5 119.5,5.5 120.5,5.5 121.5,5.5 122.5,5.5 123.5,5.5 124.5,5.5 125.5,5.5 126.5,5.5 127.5,5.5 128.5,5.5 129.5,5.5 130.5,5.5 131.5,5.5 132.5,5.5 133.5,5.5 134.5,5.5 135.5,5.5 136.5,5.5 137.5,5.5 138.5,5.5 139.5,5.5 140.5,5.5 141.5,5.5 142.5,5.5 143.5,5.5 144.5,5.5 145.5,5.5 146.5,5.5 147.5,5.5 148.5,5.5 149.5,5.5 150.5,5.5 151.5,5.5 152.5,5.5 153.5,5.5 154.5,5.5 155.5,5.5 156.5,5.5 157.5,5.5 158.5,5.5 159.5,5.5 160.5,5.5 161.5,5.5 162.5,5.5 163.5,5.5 164.5,5.5 165.5,5.5 166.5,5.5 167.5,5.5 168.5,5.5 169.5,5.5 170.5,5.5 171.5,5.5 172.5,5.5 173.5,5.5 174.5,5.5 175.5,5.5 176.5,5.5 177.5,5.5 178.5,5.5 179.5,5.5 180.5,5.5 181.5,5.5 182.5,5.5 183.5,5.5 184.5,5.5 185.5,5.5 186.5,5.5 187.5,5.5 188.5,5.5 189.5,5.5 190.5,5.5 191.5,5.5 192.5,5.5 193.5,5.5 194.5,5.5 195.5,5.5 196.5,5.5 197.5,5.5 198.5,5.5 199.5,5.5 200.5,5.5 201.5,5.5 202.5,5.5 203.5,5.5 204.5,5.5 205.5,5.5 206.5,5.5 207.5,5.5 208.5,5.5 209.5,5.5 210.5,5.5 211.5,5.5 212.5,5.5 213.5,5.5 214.5,5.5 215.5,5.5 216.5,5.5 217.5,5.5 218.5,5.5 219.5,5.5 220.5,5.5 221.5,5.5 222.5,5.5 223.5,5.5 224.5,5.5 225.5,5.5 226.5,5.5 227.5,5.5 228.5,5.5 229.5,5.5 230.5,5.5 231.5,5.5 232.5,5.5 233.5,5.5 234.5,5.5 235.5,5.5 236.5,5.5 237.5,5.5 238.5,5.5 239.5,5.5 240.5,5.5 241.5,5.5 242.5,5.5 243.5,5.5 244.5,5.5 245.5,5.5 246.5,5.5 247.5,5.5 248.5,5.5 249.5,5.5 250.5,5.5 251.5,5.5 252.5,5.5 253.5,5.5 254.5,5.5 255.5,5.5 256.5,5.5 257.5,5.5 258.5,5.5 259.5,5.5 260.5,5.5 261.5,5.5 262.5,5.5 263.5,5.5 264.5,5.5 265.5,5.5 266.5,5.5 267.5,5.5 268.5,5.5 269.5,5.5 270.5,5.5 271.5,5.5 272.5,5.5 273.5,5.5 274.5,5.5 275.5,5.5 276.5,5.5 277.5,5.5 278.5,5.5 279.5,5.5 280.5,5.5 281.5,5.5 282.5,5.5 283.5,5.5 284.5,5.5 285.5,5.5 286.5,5.5 287.5,5.5 288.5,5.5 289.5,5.5 290.5,5.5 291.5,5.5 292.5,5.5 293.5,5.5 294.5,5.5 295.5,5.5 296.5,5.5 297.5,5.5 298.5,5.5 299.5,5.5" fill="none" stroke="#f00" stroke-width="1" stroke-linejoin="miter"/><g font-family='"Liberation Sans", sans-serif' font-size="10" fill="#000" text-anchor="end"><text x="297.5" y="11">500</text><text x="297.5" y="26.00">400</text><text x="297.5" y="53.00">300</text><text x="297.5" y="80.00">200</text><text x="297.5" y="107.00">100</text><text x="297.5" y="134.00">0</text></g></svg></div><div class="gs" style="left:984px;top:299px"><svg width="300" height="150" viewBox="0 0 300 150"><rect width="300" height="150" fill="#fff"/><g font-family='"Liberation Sans", sans-serif' font-size="10" letter-spacing="0.35" fill="#000" text-anchor="middle"><text x="36.5" y="149">7:08:00 PM</text><text x="96.5" y="149">7:09:00 PM</text><text x="156.5" y="149">7:10:00 PM</text><text x="216.5" y="149">7:11:00 PM</text><text x="276.5" y="149">7:12:00 PM</text></g><path d="M36.5,0.5V135.5 M96.5,0.5V135.5 M156.5,0.5V135.5 M216.5,0.5V135.5 M276.5,0.5V135.5 M0.5,0.5H299.5V135.5H0.5Z M299.5,34.5H289.5 M299.5,68.5H289.5 M299.5,102.5H289.5" fill="none" stroke="#ccc" stroke-width="1"/><polyline points="0.5,135.5 1.5,135.5 2.5,135.5 3.5,135.5 4.5,135.5 5.5,135.5 6.5,135.5 7.5,135.5 8.5,135.5 9.5,135.5 10.5,135.5 11.5,135.5 12.5,135.5 13.5,135.5 14.5,135.5 15.5,135.5 16.5,135.5 17.5,135.5 18.5,135.5 19.5,135.5 20.5,135.5 21.5,135.5 22.5,135.5 23.5,135.5 24.5,135.5 25.5,135.5 26.5,135.5 27.5,135.5 28.5,135.5 29.5,135.5 30.5,135.5 31.5,135.5 32.5,135.5 33.5,135.5 34.5,135.5 35.5,135.5 36.5,135.5 37.5,135.5 38.5,135.5 39.5,135.5 40.5,135.5 41.5,135.5 42.5,135.5 43.5,135.5 44.5,135.5 45.5,135.5 46.5,135.5 47.5,135.5 48.5,135.5 49.5,135.5 50.5,135.5 51.5,135.5 52.5,135.5 53.5,135.5 54.5,135.5 55.5,135.5 56.5,135.5 57.5,135.5 58.5,135.5 59.5,135.5 60.5,135.5 61.5,135.5 62.5,135.5 63.5,135.5 64.5,135.5 65.5,135.5 66.5,135.5 67.5,135.5 68.5,135.5 69.5,135.5 70.5,135.5 71.5,135.5 72.5,135.5 73.5,135.5 74.5,135.5 75.5,135.5 76.5,135.5 77.5,135.5 78.5,135.5 79.5,135.5 80.5,135.5 81.5,135.5 82.5,135.5 83.5,135.5 84.5,135.5 85.5,135.5 86.5,135.5 87.5,135.5 88.5,135.5 89.5,135.5 90.5,135.5 91.5,135.5 92.5,135.5 93.5,135.5 94.5,135.5 95.5,135.5 96.5,135.5 97.5,135.5 98.5,135.5 99.5,135.5 100.5,0.5 101.5,0.5 102.5,0.5 103.5,0.5 104.5,0.5 105.5,0.5 106.5,0.5 107.5,0.5 108.5,0.5 109.5,0.5 110.5,7.5 111.5,0.5 112.5,7.5 113.5,0.5 114.5,0.5 115.5,0.5 116.5,0.5 117.5,0.5 118.5,0.5 119.5,0.5 120.5,0.5 121.5,0.5 122.5,0.5 123.5,0.5 124.5,7.5 125.5,0.5 126.5,0.5 127.5,7.5 128.5,0.5 129.5,0.5 130.5,0.5 131.5,0.5 132.5,0.5 133.5,0.5 134.5,0.5 135.5,0.5 136.5,0.5 137.5,7.5 138.5,0.5 139.5,0.5 140.5,7.5 141.5,0.5 142.5,0.5 143.5,7.5 144.5,0.5 145.5,0.5 146.5,7.5 147.5,0.5 148.5,0.5 149.5,7.5 150.5,0.5 151.5,0.5 152.5,7.5 153.5,0.5 154.5,0.5 155.5,0.5 156.5,0.5 157.5,0.5 158.5,0.5 159.5,0.5 160.5,0.5 161.5,7.5 162.5,7.5 163.5,7.5 164.5,7.5 165.5,0.5 166.5,0.5 167.5,0.5 168.5,0.5 169.5,0.5 170.5,0.5 171.5,7.5 172.5,0.5 173.5,0.5 174.5,7.5 175.5,0.5 176.5,0.5 177.5,7.5 178.5,0.5 179.5,0.5 180.5,0.5 181.5,0.5 182.5,0.5 183.5,0.5 184.5,0.5 185.5,0.5 186.5,0.5 187.5,0.5 188.5,0.5 189.5,7.5 190.5,0.5 191.5,0.5 192.5,7.5 193.5,0.5 194.5,0.5 195.5,0.5 196.5,0.5 197.5,0.5 198.5,0.5 199.5,0.5 200.5,0.5 201.5,0.5 202.5,7.5 203.5,7.5 204.5,7.5 205.5,7.5 206.5,0.5 207.5,0.5 208.5,0.5 209.5,0.5 210.5,0.5 211.5,0.5 212.5,0.5 213.5,0.5 214.5,0.5 215.5,7.5 216.5,0.5 217.5,0.5 218.5,7.5 219.5,0.5 220.5,0.5 221.5,7.5 222.5,0.5 223.5,0.5 224.5,0.5 225.5,0.5 226.5,0.5 227.5,0.5 228.5,0.5 229.5,0.5 230.5,7.5 231.5,0.5 232.5,0.5 233.5,7.5 234.5,0.5 235.5,0.5 236.5,7.5 237.5,0.5 238.5,0.5 239.5,7.5 240.5,0.5 241.5,0.5 242.5,7.5 243.5,0.5 244.5,0.5 245.5,7.5 246.5,0.5 247.5,0.5 248.5,7.5 249.5,0.5 250.5,0.5 251.5,0.5 252.5,0.5 253.5,0.5 254.5,0.5 255.5,7.5 256.5,0.5 257.5,0.5 258.5,13.5 259.5,0.5 260.5,0.5 261.5,0.5 262.5,0.5 263.5,0.5 264.5,0.5 265.5,0.5 266.5,0.5 267.5,0.5 268.5,0.5 269.5,0.5 270.5,0.5 271.5,0.5 272.5,7.5 273.5,0.5 274.5,0.5 275.5,7.5 276.5,0.5 277.5,0.5 278.5,0.5 279.5,0.5 280.5,7.5 281.5,7.5 282.5,7.5 283.5,0.5 284.5,0.5 285.5,0.5 286.5,0.5 287.5,0.5 288.5,0.5 289.5,0.5 290.5,0.5 291.5,0.5 292.5,7.5 293.5,0.5 294.5,0.5 295.5,7.5 296.5,0.5 297.5,0.5 298.5,7.5 299.5,0.5" fill="none" stroke="#f00" stroke-width="1" stroke-linejoin="miter"/><g font-family='"Liberation Sans", sans-serif' font-size="10" fill="#000" text-anchor="end"><text x="297.5" y="11">20</text><text x="297.5" y="32.75">15</text><text x="297.5" y="66.50">10</text><text x="297.5" y="100.25">5</text><text x="297.5" y="134.00">0</text></g></svg></div><div class="gs" style="left:36px;top:486px"><svg width="300" height="150" viewBox="0 0 300 150"><rect width="300" height="150" fill="#fff"/><g font-family='"Liberation Sans", sans-serif' font-size="10" letter-spacing="0.35" fill="#000" text-anchor="middle"><text x="36.5" y="149">7:08:00 PM</text><text x="96.5" y="149">7:09:00 PM</text><text x="156.5" y="149">7:10:00 PM</text><text x="216.5" y="149">7:11:00 PM</text><text x="276.5" y="149">7:12:00 PM</text></g><path d="M36.5,0.5V135.5 M96.5,0.5V135.5 M156.5,0.5V135.5 M216.5,0.5V135.5 M276.5,0.5V135.5 M0.5,0.5H299.5V135.5H0.5Z M299.5,27.5H289.5 M299.5,54.5H289.5 M299.5,82.5H289.5 M299.5,109.5H289.5" fill="none" stroke="#ccc" stroke-width="1"/><polyline points="0.5,135.5 1.5,135.5 2.5,135.5 3.5,135.5 4.5,135.5 5.5,135.5 6.5,135.5 7.5,135.5 8.5,135.5 9.5,135.5 10.5,135.5 11.5,135.5 12.5,135.5 13.5,135.5 14.5,135.5 15.5,135.5 16.5,135.5 17.5,135.5 18.5,135.5 19.5,135.5 20.5,135.5 21.5,135.5 22.5,135.5 23.5,135.5 24.5,135.5 25.5,135.5 26.5,135.5 27.5,135.5 28.5,135.5 29.5,135.5 30.5,135.5 31.5,135.5 32.5,135.5 33.5,135.5 34.5,135.5 35.5,135.5 36.5,135.5 37.5,135.5 38.5,135.5 39.5,135.5 40.5,135.5 41.5,135.5 42.5,135.5 43.5,135.5 44.5,135.5 45.5,135.5 46.5,135.5 47.5,135.5 48.5,135.5 49.5,135.5 50.5,135.5 51.5,135.5 52.5,135.5 53.5,135.5 54.5,135.5 55.5,135.5 56.5,135.5 57.5,135.5 58.5,135.5 59.5,135.5 60.5,135.5 61.5,135.5 62.5,135.5 63.5,135.5 64.5,135.5 65.5,135.5 66.5,135.5 67.5,135.5 68.5,135.5 69.5,135.5 70.5,135.5 71.5,135.5 72.5,135.5 73.5,135.5 74.5,135.5 75.5,135.5 76.5,135.5 77.5,135.5 78.5,135.5 79.5,135.5 80.5,135.5 81.5,135.5 82.5,135.5 83.5,135.5 84.5,135.5 85.5,135.5 86.5,135.5 87.5,135.5 88.5,135.5 89.5,135.5 90.5,135.5 91.5,135.5 92.5,135.5 93.5,135.5 94.5,135.5 95.5,135.5 96.5,135.5 97.5,135.5 98.5,135.5 99.5,135.5 100.5,38.5 101.5,32.5 102.5,27.5 103.5,27.5 104.5,27.5 105.5,27.5 106.5,27.5 107.5,27.5 108.5,27.5 109.5,27.5 110.5,27.5 111.5,27.5 112.5,27.5 113.5,27.5 114.5,32.5 115.5,27.5 116.5,27.5 117.5,27.5 118.5,27.5 119.5,27.5 120.5,27.5 121.5,27.5 122.5,32.5 123.5,27.5 124.5,27.5 125.5,27.5 126.5,27.5 127.5,27.5 128.5,27.5 129.5,27.5 130.5,27.5 131.5,27.5 132.5,32.5 133.5,27.5 134.5,27.5 135.5,27.5 136.5,27.5 137.5,27.5 138.5,27.5 139.5,27.5 140.5,27.5 141.5,27.5 142.5,22.5 143.5,32.5 144.5,22.5 145.5,32.5 146.5,22.5 147.5,32.5 148.5,22.5 149.5,27.5 150.5,32.5 151.5,27.5 152.5,27.5 153.5,27.5 154.5,27.5 155.5,27.5 156.5,27.5 157.5,27.5 158.5,27.5 159.5,27.5 160.5,27.5 161.5,32.5 162.5,27.5 163.5,32.5 164.5,27.5 165.5,32.5 166.5,27.5 167.5,27.5 168.5,27.5 169.5,27.5 170.5,27.5 171.5,27.5 172.5,27.5 173.5,27.5 174.5,27.5 175.5,27.5 176.5,27.5 177.5,27.5 178.5,38.5 179.5,27.5 180.5,27.5 181.5,27.5 182.5,27.5 183.5,27.5 184.5,27.5 185.5,27.5 186.5,27.5 187.5,27.5 188.5,27.5 189.5,27.5 190.5,27.5 191.5,32.5 192.5,27.5 193.5,27.5 194.5,27.5 195.5,27.5 196.5,27.5 197.5,27.5 198.5,27.5 199.5,27.5 200.5,32.5 201.5,27.5 202.5,27.5 203.5,27.5 204.5,27.5 205.5,38.5 206.5,27.5 207.5,22.5 208.5,32.5 209.5,22.5 210.5,32.5 211.5,22.5 212.5,27.5 213.5,27.5 214.5,27.5 215.5,27.5 216.5,27.5 217.5,27.5 218.5,27.5 219.5,22.5 220.5,32.5 221.5,22.5 222.5,32.5 223.5,22.5 224.5,32.5 225.5,22.5 226.5,32.5 227.5,27.5 228.5,27.5 229.5,27.5 230.5,32.5 231.5,27.5 232.5,32.5 233.5,27.5 234.5,32.5 235.5,27.5 236.5,32.5 237.5,27.5 238.5,32.5 239.5,27.5 240.5,27.5 241.5,27.5 242.5,27.5 243.5,27.5 244.5,27.5 245.5,27.5 246.5,27.5 247.5,27.5 248.5,27.5 249.5,27.5 250.5,32.5 251.5,27.5 252.5,27.5 253.5,27.5 254.5,27.5 255.5,27.5 256.5,32.5 257.5,27.5 258.5,38.5 259.5,27.5 260.5,32.5 261.5,27.5 262.5,32.5 263.5,27.5 264.5,32.5 265.5,27.5 266.5,27.5 267.5,27.5 268.5,27.5 269.5,27.5 270.5,27.5 271.5,27.5 272.5,27.5 273.5,27.5 274.5,32.5 275.5,27.5 276.5,32.5 277.5,27.5 278.5,32.5 279.5,27.5 280.5,32.5 281.5,27.5 282.5,27.5 283.5,32.5 284.5,27.5 285.5,27.5 286.5,27.5 287.5,27.5 288.5,27.5 289.5,27.5 290.5,27.5 291.5,27.5 292.5,27.5 293.5,27.5 294.5,22.5 295.5,27.5 296.5,32.5 297.5,27.5 298.5,32.5 299.5,27.5" fill="none" stroke="#f00" stroke-width="1" stroke-linejoin="miter"/><g font-family='"Liberation Sans", sans-serif' font-size="10" fill="#000" text-anchor="end"><text x="297.5" y="11">25</text><text x="297.5" y="26.00">20</text><text x="297.5" y="53.00">15</text><text x="297.5" y="80.00">10</text><text x="297.5" y="107.00">5</text><text x="297.5" y="134.00">0</text></g></svg></div><div class="gs" style="left:352px;top:486px"><svg width="300" height="150" viewBox="0 0 300 150"><rect width="300" height="150" fill="#fff"/><g font-family='"Liberation Sans", sans-serif' font-size="10" letter-spacing="0.35" fill="#000" text-anchor="middle"><text x="36.5" y="149">7:08:00 PM</text><text x="96.5" y="149">7:09:00 PM</text><text x="156.5" y="149">7:10:00 PM</text><text x="216.5" y="149">7:11:00 PM</text><text x="276.5" y="149">7:12:00 PM</text></g><path d="M36.5,0.5V135.5 M96.5,0.5V135.5 M156.5,0.5V135.5 M216.5,0.5V135.5 M276.5,0.5V135.5 M0.5,0.5H299.5V135.5H0.5Z M299.5,27.5H289.5 M299.5,54.5H289.5 M299.5,82.5H289.5 M299.5,109.5H289.5" fill="none" stroke="#ccc" stroke-width="1"/><polyline points="0.5,135.5 1.5,135.5 2.5,135.5 3.5,135.5 4.5,135.5 5.5,135.5 6.5,135.5 7.5,135.5 8.5,135.5 9.5,135.5 10.5,135.5 11.5,135.5 12.5,135.5 13.5,135.5 14.5,135.5 15.5,135.5 16.5,135.5 17.5,135.5 18.5,135.5 19.5,135.5 20.5,135.5 21.5,135.5 22.5,135.5 23.5,135.5 24.5,135.5 25.5,135.5 26.5,135.5 27.5,135.5 28.5,135.5 29.5,135.5 30.5,135.5 31.5,135.5 32.5,135.5 33.5,135.5 34.5,135.5 35.5,135.5 36.5,135.5 37.5,135.5 38.5,135.5 39.5,135.5 40.5,135.5 41.5,135.5 42.5,135.5 43.5,135.5 44.5,135.5 45.5,135.5 46.5,135.5 47.5,135.5 48.5,135.5 49.5,135.5 50.5,135.5 51.5,135.5 52.5,135.5 53.5,135.5 54.5,135.5 55.5,135.5 56.5,135.5 57.5,135.5 58.5,135.5 59.5,135.5 60.5,135.5 61.5,135.5 62.5,135.5 63.5,135.5 64.5,135.5 65.5,135.5 66.5,135.5 67.5,135.5 68.5,135.5 69.5,135.5 70.5,135.5 71.5,135.5 72.5,135.5 73.5,135.5 74.5,135.5 75.5,135.5 76.5,135.5 77.5,135.5 78.5,135.5 79.5,135.5 80.5,135.5 81.5,135.5 82.5,135.5 83.5,135.5 84.5,135.5 85.5,135.5 86.5,135.5 87.5,135.5 88.5,135.5 89.5,135.5 90.5,135.5 91.5,135.5 92.5,135.5 93.5,135.5 94.5,135.5 95.5,135.5 96.5,135.5 97.5,135.5 98.5,135.5 99.5,135.5 100.5,38.5 101.5,32.5 102.5,27.5 103.5,27.5 104.5,27.5 105.5,27.5 106.5,27.5 107.5,27.5 108.5,27.5 109.5,27.5 110.5,27.5 111.5,27.5 112.5,27.5 113.5,27.5 114.5,32.5 115.5,27.5 116.5,27.5 117.5,27.5 118.5,27.5 119.5,27.5 120.5,27.5 121.5,27.5 122.5,32.5 123.5,27.5 124.5,27.5 125.5,27.5 126.5,27.5 127.5,27.5 128.5,27.5 129.5,27.5 130.5,27.5 131.5,27.5 132.5,32.5 133.5,27.5 134.5,27.5 135.5,27.5 136.5,27.5 137.5,27.5 138.5,27.5 139.5,27.5 140.5,27.5 141.5,27.5 142.5,22.5 143.5,32.5 144.5,22.5 145.5,32.5 146.5,22.5 147.5,32.5 148.5,22.5 149.5,27.5 150.5,32.5 151.5,27.5 152.5,27.5 153.5,27.5 154.5,27.5 155.5,27.5 156.5,27.5 157.5,27.5 158.5,27.5 159.5,27.5 160.5,27.5 161.5,32.5 162.5,27.5 163.5,32.5 164.5,27.5 165.5,32.5 166.5,27.5 167.5,27.5 168.5,27.5 169.5,27.5 170.5,27.5 171.5,27.5 172.5,27.5 173.5,27.5 174.5,27.5 175.5,27.5 176.5,27.5 177.5,27.5 178.5,38.5 179.5,27.5 180.5,27.5 181.5,27.5 182.5,27.5 183.5,27.5 184.5,27.5 185.5,27.5 186.5,27.5 187.5,27.5 188.5,27.5 189.5,27.5 190.5,27.5 191.5,32.5 192.5,27.5 193.5,27.5 194.5,27.5 195.5,27.5 196.5,27.5 197.5,27.5 198.5,27.5 199.5,27.5 200.5,32.5 201.5,27.5 202.5,27.5 203.5,27.5 204.5,27.5 205.5,38.5 206.5,27.5 207.5,22.5 208.5,32.5 209.5,22.5 210.5,32.5 211.5,22.5 212.5,27.5 213.5,27.5 214.5,27.5 215.5,27.5 216.5,27.5 217.5,27.5 218.5,27.5 219.5,22.5 220.5,32.5 221.5,22.5 222.5,32.5 223.5,22.5 224.5,32.5 225.5,22.5 226.5,32.5 227.5,27.5 228.5,27.5 229.5,27.5 230.5,32.5 231.5,27.5 232.5,32.5 233.5,27.5 234.5,32.5 235.5,27.5 236.5,32.5 237.5,27.5 238.5,32.5 239.5,27.5 240.5,27.5 241.5,27.5 242.5,27.5 243.5,27.5 244.5,27.5 245.5,27.5 246.5,27.5 247.5,27.5 248.5,27.5 249.5,27.5 250.5,32.5 251.5,27.5 252.5,27.5 253.5,27.5 254.5,27.5 255.5,27.5 256.5,32.5 257.5,27.5 258.5,38.5 259.5,27.5 260.5,32.5 261.5,27.5 262.5,32.5 263.5,27.5 264.5,32.5 265.5,27.5 266.5,27.5 267.5,27.5 268.5,27.5 269.5,27.5 270.5,27.5 271.5,27.5 272.5,27.5 273.5,27.5 274.5,32.5 275.5,27.5 276.5,32.5 277.5,27.5 278.5,32.5 279.5,27.5 280.5,32.5 281.5,27.5 282.5,27.5 283.5,32.5 284.5,27.5 285.5,27.5 286.5,27.5 287.5,27.5 288.5,27.5 289.5,27.5 290.5,27.5 291.5,27.5 292.5,27.5 293.5,27.5 294.5,22.5 295.5,27.5 296.5,32.5 297.5,27.5 298.5,32.5 299.5,27.5" fill="none" stroke="#f00" stroke-width="1" stroke-linejoin="miter"/><g font-family='"Liberation Sans", sans-serif' font-size="10" fill="#000" text-anchor="end"><text x="297.5" y="11">25</text><text x="297.5" y="26.00">20</text><text x="297.5" y="53.00">15</text><text x="297.5" y="80.00">10</text><text x="297.5" y="107.00">5</text><text x="297.5" y="134.00">0</text></g></svg></div><div class="gs" style="left:668px;top:486px"><svg width="300" height="150" viewBox="0 0 300 150"><rect width="300" height="150" fill="#fff"/><g font-family='"Liberation Sans", sans-serif' font-size="10" letter-spacing="0.35" fill="#000" text-anchor="middle"><text x="36.5" y="149">7:08:00 PM</text><text x="96.5" y="149">7:09:00 PM</text><text x="156.5" y="149">7:10:00 PM</text><text x="216.5" y="149">7:11:00 PM</text><text x="276.5" y="149">7:12:00 PM</text></g><path d="M36.5,0.5V135.5 M96.5,0.5V135.5 M156.5,0.5V135.5 M216.5,0.5V135.5 M276.5,0.5V135.5 M0.5,0.5H299.5V135.5H0.5Z M299.5,27.5H289.5 M299.5,54.5H289.5 M299.5,82.5H289.5 M299.5,109.5H289.5" fill="none" stroke="#ccc" stroke-width="1"/><polyline points="0.5,135.5 1.5,135.5 2.5,135.5 3.5,135.5 4.5,135.5 5.5,135.5 6.5,135.5 7.5,135.5 8.5,135.5 9.5,135.5 10.5,135.5 11.5,135.5 12.5,135.5 13.5,135.5 14.5,135.5 15.5,135.5 16.5,135.5 17.5,135.5 18.5,135.5 19.5,135.5 20.5,135.5 21.5,135.5 22.5,135.5 23.5,135.5 24.5,135.5 25.5,135.5 26.5,135.5 27.5,135.5 28.5,135.5 29.5,135.5 30.5,135.5 31.5,135.5 32.5,135.5 33.5,135.5 34.5,135.5 35.5,135.5 36.5,135.5 37.5,135.5 38.5,135.5 39.5,135.5 40.5,135.5 41.5,135.5 42.5,135.5 43.5,135.5 44.5,135.5 45.5,135.5 46.5,135.5 47.5,135.5 48.5,135.5 49.5,135.5 50.5,135.5 51.5,135.5 52.5,135.5 53.5,135.5 54.5,135.5 55.5,135.5 56.5,135.5 57.5,135.5 58.5,135.5 59.5,135.5 60.5,135.5 61.5,135.5 62.5,135.5 63.5,135.5 64.5,135.5 65.5,135.5 66.5,135.5 67.5,135.5 68.5,135.5 69.5,135.5 70.5,135.5 71.5,135.5 72.5,135.5 73.5,135.5 74.5,135.5 75.5,135.5 76.5,135.5 77.5,135.5 78.5,135.5 79.5,135.5 80.5,135.5 81.5,135.5 82.5,135.5 83.5,135.5 84.5,135.5 85.5,135.5 86.5,135.5 87.5,135.5 88.5,135.5 89.5,135.5 90.5,135.5 91.5,135.5 92.5,135.5 93.5,135.5 94.5,135.5 95.5,135.5 96.5,135.5 97.5,135.5 98.5,135.5 99.5,135.5 100.5,135.5 101.5,117.5 102.5,115.5 103.5,113.5 104.5,111.5 105.5,109.5 106.5,110.5 107.5,109.5 108.5,107.5 109.5,106.5 110.5,105.5 111.5,105.5 112.5,101.5 113.5,98.5 114.5,98.5 115.5,98.5 116.5,95.5 117.5,93.5 118.5,86.5 119.5,87.5 120.5,87.5 121.5,81.5 122.5,75.5 123.5,69.5 124.5,63.5 125.5,63.5 126.5,62.5 127.5,61.5 128.5,61.5 129.5,51.5 130.5,45.5 131.5,39.5 132.5,41.5 133.5,35.5 134.5,30.5 135.5,29.5 136.5,29.5 137.5,24.5 138.5,19.5 139.5,27.5 140.5,34.5 141.5,25.5 142.5,16.5 143.5,30.5 144.5,45.5 145.5,37.5 146.5,29.5 147.5,39.5 148.5,35.5 149.5,31.5 150.5,26.5 151.5,34.5 152.5,41.5 153.5,36.5 154.5,31.5 155.5,27.5 156.5,22.5 157.5,33.5 158.5,33.5 159.5,34.5 160.5,36.5 161.5,28.5 162.5,19.5 163.5,28.5 164.5,37.5 165.5,45.5 166.5,36.5 167.5,26.5 168.5,35.5 169.5,21.5 170.5,26.5 171.5,32.5 172.5,37.5 173.5,32.5 174.5,26.5 175.5,21.5 176.5,25.5 177.5,30.5 178.5,34.5 179.5,38.5 180.5,38.5 181.5,37.5 182.5,34.5 183.5,35.5 184.5,36.5 185.5,33.5 186.5,30.5 187.5,28.5 188.5,25.5 189.5,27.5 190.5,29.5 191.5,27.5 192.5,33.5 193.5,39.5 194.5,36.5 195.5,33.5 196.5,29.5 197.5,25.5 198.5,36.5 199.5,33.5 200.5,29.5 201.5,37.5 202.5,33.5 203.5,29.5 204.5,25.5 205.5,34.5 206.5,42.5 207.5,32.5 208.5,37.5 209.5,42.5 210.5,15.5 211.5,34.5 212.5,29.5 213.5,24.5 214.5,31.5 215.5,39.5 216.5,31.5 217.5,24.5 218.5,31.5 219.5,38.5 220.5,25.5 221.5,34.5 222.5,44.5 223.5,24.5 224.5,42.5 225.5,34.5 226.5,27.5 227.5,42.5 228.5,38.5 229.5,34.5 230.5,38.5 231.5,28.5 232.5,18.5 233.5,25.5 234.5,31.5 235.5,31.5 236.5,30.5 237.5,35.5 238.5,34.5 239.5,38.5 240.5,42.5 241.5,32.5 242.5,37.5 243.5,34.5 244.5,30.5 245.5,27.5 246.5,29.5 247.5,31.5 248.5,31.5 249.5,31.5 250.5,33.5 251.5,32.5 252.5,31.5 253.5,30.5 254.5,24.5 255.5,42.5 256.5,28.5 257.5,38.5 258.5,34.5 259.5,28.5 260.5,40.5 261.5,34.5 262.5,38.5 263.5,32.5 264.5,38.5 265.5,36.5 266.5,33.5 267.5,30.5 268.5,27.5 269.5,22.5 270.5,40.5 271.5,35.5 272.5,30.5 273.5,29.5 274.5,25.5 275.5,37.5 276.5,31.5 277.5,32.5 278.5,32.5 279.5,27.5 280.5,34.5 281.5,34.5 282.5,34.5 283.5,40.5 284.5,31.5 285.5,22.5 286.5,35.5 287.5,29.5 288.5,30.5 289.5,31.5 290.5,39.5 291.5,36.5 292.5,33.5 293.5,31.5 294.5,30.5 295.5,31.5 296.5,41.5 297.5,34.5 298.5,26.5 299.5,34.5" fill="none" stroke="#f00" stroke-width="1" stroke-linejoin="miter"/><g font-family='"Liberation Sans", sans-serif' font-size="10" fill="#000" text-anchor="end"><text x="297.5" y="11">2.5 M</text><text x="297.5" y="26.00">2.0 M</text><text x="297.5" y="53.00">1.5 M</text><text x="297.5" y="80.00">1.0 M</text><text x="297.5" y="107.00">0.5 M</text><text x="297.5" y="134.00">0.0 M</text></g></svg></div><div class="gs" style="left:984px;top:486px"><svg width="300" height="150" viewBox="0 0 300 150"><rect width="300" height="150" fill="#fff"/><g font-family='"Liberation Sans", sans-serif' font-size="10" letter-spacing="0.35" fill="#000" text-anchor="middle"><text x="36.5" y="149">7:08:00 PM</text><text x="96.5" y="149">7:09:00 PM</text><text x="156.5" y="149">7:10:00 PM</text><text x="216.5" y="149">7:11:00 PM</text><text x="276.5" y="149">7:12:00 PM</text></g><path d="M36.5,0.5V135.5 M96.5,0.5V135.5 M156.5,0.5V135.5 M216.5,0.5V135.5 M276.5,0.5V135.5 M0.5,0.5H299.5V135.5H0.5Z M299.5,45.5H289.5 M299.5,91.5H289.5" fill="none" stroke="#ccc" stroke-width="1"/><polyline points="0.5,135.5 1.5,135.5 2.5,135.5 3.5,135.5 4.5,135.5 5.5,135.5 6.5,135.5 7.5,135.5 8.5,135.5 9.5,135.5 10.5,135.5 11.5,135.5 12.5,135.5 13.5,135.5 14.5,135.5 15.5,135.5 16.5,135.5 17.5,135.5 18.5,135.5 19.5,135.5 20.5,135.5 21.5,135.5 22.5,135.5 23.5,135.5 24.5,135.5 25.5,135.5 26.5,135.5 27.5,135.5 28.5,135.5 29.5,135.5 30.5,135.5 31.5,135.5 32.5,135.5 33.5,135.5 34.5,135.5 35.5,135.5 36.5,135.5 37.5,135.5 38.5,135.5 39.5,135.5 40.5,135.5 41.5,135.5 42.5,135.5 43.5,135.5 44.5,135.5 45.5,135.5 46.5,135.5 47.5,135.5 48.5,135.5 49.5,135.5 50.5,135.5 51.5,135.5 52.5,135.5 53.5,135.5 54.5,135.5 55.5,135.5 56.5,135.5 57.5,135.5 58.5,135.5 59.5,135.5 60.5,135.5 61.5,135.5 62.5,135.5 63.5,135.5 64.5,135.5 65.5,135.5 66.5,135.5 67.5,135.5 68.5,135.5 69.5,135.5 70.5,135.5 71.5,135.5 72.5,135.5 73.5,135.5 74.5,135.5 75.5,135.5 76.5,135.5 77.5,135.5 78.5,135.5 79.5,135.5 80.5,135.5 81.5,135.5 82.5,135.5 83.5,135.5 84.5,135.5 85.5,135.5 86.5,135.5 87.5,135.5 88.5,135.5 89.5,135.5 90.5,135.5 91.5,135.5 92.5,135.5 93.5,135.5 94.5,135.5 95.5,135.5 96.5,135.5 97.5,135.5 98.5,135.5 99.5,135.5 100.5,135.5 101.5,117.5 102.5,115.5 103.5,113.5 104.5,111.5 105.5,109.5 106.5,110.5 107.5,109.5 108.5,107.5 109.5,106.5 110.5,105.5 111.5,105.5 112.5,101.5 113.5,98.5 114.5,98.5 115.5,98.5 116.5,95.5 117.5,93.5 118.5,86.5 119.5,87.5 120.5,87.5 121.5,81.5 122.5,75.5 123.5,69.5 124.5,63.5 125.5,63.5 126.5,62.5 127.5,61.5 128.5,61.5 129.5,51.5 130.5,45.5 131.5,39.5 132.5,41.5 133.5,35.5 134.5,30.5 135.5,29.5 136.5,29.5 137.5,24.5 138.5,19.5 139.5,27.5 140.5,34.5 141.5,25.5 142.5,16.5 143.5,30.5 144.5,45.5 145.5,37.5 146.5,29.5 147.5,39.5 148.5,35.5 149.5,31.5 150.5,26.5 151.5,34.5 152.5,41.5 153.5,36.5 154.5,31.5 155.5,27.5 156.5,22.5 157.5,33.5 158.5,33.5 159.5,34.5 160.5,36.5 161.5,28.5 162.5,19.5 163.5,28.5 164.5,37.5 165.5,45.5 166.5,36.5 167.5,26.5 168.5,35.5 169.5,21.5 170.5,26.5 171.5,32.5 172.5,37.5 173.5,32.5 174.5,26.5 175.5,21.5 176.5,25.5 177.5,30.5 178.5,34.5 179.5,38.5 180.5,38.5 181.5,37.5 182.5,34.5 183.5,35.5 184.5,36.5 185.5,33.5 186.5,30.5 187.5,28.5 188.5,25.5 189.5,27.5 190.5,29.5 191.5,27.5 192.5,33.5 193.5,39.5 194.5,36.5 195.5,33.5 196.5,29.5 197.5,25.5 198.5,36.5 199.5,33.5 200.5,29.5 201.5,37.5 202.5,33.5 203.5,29.5 204.5,25.5 205.5,34.5 206.5,42.5 207.5,32.5 208.5,37.5 209.5,42.5 210.5,15.5 211.5,34.5 212.5,29.5 213.5,24.5 214.5,31.5 215.5,39.5 216.5,31.5 217.5,24.5 218.5,31.5 219.5,38.5 220.5,25.5 221.5,34.5 222.5,44.5 223.5,24.5 224.5,42.5 225.5,34.5 226.5,27.5 227.5,42.5 228.5,38.5 229.5,34.5 230.5,38.5 231.5,28.5 232.5,18.5 233.5,25.5 234.5,31.5 235.5,31.5 236.5,30.5 237.5,35.5 238.5,34.5 239.5,38.5 240.5,42.5 241.5,32.5 242.5,37.5 243.5,34.5 244.5,30.5 245.5,27.5 246.5,29.5 247.5,31.5 248.5,31.5 249.5,31.5 250.5,33.5 251.5,32.5 252.5,31.5 253.5,30.5 254.5,24.5 255.5,42.5 256.5,28.5 257.5,38.5 258.5,34.5 259.5,28.5 260.5,40.5 261.5,34.5 262.5,38.5 263.5,32.5 264.5,38.5 265.5,36.5 266.5,33.5 267.5,30.5 268.5,27.5 269.5,22.5 270.5,40.5 271.5,35.5 272.5,30.5 273.5,29.5 274.5,25.5 275.5,37.5 276.5,31.5 277.5,32.5 278.5,32.5 279.5,27.5 280.5,34.5 281.5,34.5 282.5,34.5 283.5,40.5 284.5,31.5 285.5,22.5 286.5,35.5 287.5,29.5 288.5,30.5 289.5,31.5 290.5,39.5 291.5,36.5 292.5,33.5 293.5,31.5 294.5,30.5 295.5,31.5 296.5,41.5 297.5,34.5 298.5,26.5 299.5,34.5" fill="none" stroke="#f00" stroke-width="1" stroke-linejoin="miter"/><g font-family='"Liberation Sans", sans-serif' font-size="10" fill="#000" text-anchor="end"><text x="297.5" y="11">300</text><text x="297.5" y="44.00">200</text><text x="297.5" y="89.00">100</text><text x="297.5" y="134.00">0</text></g></svg></div><div class="gs" style="left:36px;top:673px"><svg width="300" height="150" viewBox="0 0 300 150"><rect width="300" height="150" fill="#fff"/><g font-family='"Liberation Sans", sans-serif' font-size="10" letter-spacing="0.35" fill="#000" text-anchor="middle"><text x="36.5" y="149">7:08:00 PM</text><text x="96.5" y="149">7:09:00 PM</text><text x="156.5" y="149">7:10:00 PM</text><text x="216.5" y="149">7:11:00 PM</text><text x="276.5" y="149">7:12:00 PM</text></g><path d="M36.5,0.5V135.5 M96.5,0.5V135.5 M156.5,0.5V135.5 M216.5,0.5V135.5 M276.5,0.5V135.5 M0.5,0.5H299.5V135.5H0.5Z" fill="none" stroke="#ccc" stroke-width="1"/><polyline points="0.5,135.5 1.5,135.5 2.5,135.5 3.5,135.5 4.5,135.5 5.5,135.5 6.5,135.5 7.5,135.5 8.5,135.5 9.5,135.5 10.5,135.5 11.5,135.5 12.5,135.5 13.5,135.5 14.5,135.5 15.5,135.5 16.5,135.5 17.5,135.5 18.5,135.5 19.5,135.5 20.5,135.5 21.5,135.5 22.5,135.5 23.5,135.5 24.5,135.5 25.5,135.5 26.5,135.5 27.5,135.5 28.5,135.5 29.5,135.5 30.5,135.5 31.5,135.5 32.5,135.5 33.5,135.5 34.5,135.5 35.5,135.5 36.5,135.5 37.5,135.5 38.5,135.5 39.5,135.5 40.5,135.5 41.5,135.5 42.5,135.5 43.5,135.5 44.5,135.5 45.5,135.5 46.5,135.5 47.5,135.5 48.5,135.5 49.5,135.5 50.5,135.5 51.5,135.5 52.5,135.5 53.5,135.5 54.5,135.5 55.5,135.5 56.5,135.5 57.5,135.5 58.5,135.5 59.5,135.5 60.5,135.5 61.5,135.5 62.5,135.5 63.5,135.5 64.5,135.5 65.5,135.5 66.5,135.5 67.5,135.5 68.5,135.5 69.5,135.5 70.5,135.5 71.5,135.5 72.5,135.5 73.5,135.5 74.5,135.5 75.5,135.5 76.5,135.5 77.5,135.5 78.5,135.5 79.5,135.5 80.5,135.5 81.5,135.5 82.5,135.5 83.5,135.5 84.5,135.5 85.5,135.5 86.5,135.5 87.5,135.5 88.5,135.5 89.5,135.5 90.5,135.5 91.5,135.5 92.5,135.5 93.5,135.5 94.5,135.5 95.5,135.5 96.5,135.5 97.5,135.5 98.5,135.5 99.5,135.5 100.5,135.5 101.5,135.5 102.5,135.5 103.5,135.5 104.5,135.5 105.5,135.5 106.5,135.5 107.5,135.5 108.5,135.5 109.5,135.5 110.5,135.5 111.5,135.5 112.5,135.5 113.5,135.5 114.5,135.5 115.5,135.5 116.5,135.5 117.5,135.5 118.5,135.5 119.5,135.5 120.5,135.5 121.5,135.5 122.5,135.5 123.5,135.5 124.5,135.5 125.5,135.5 126.5,135.5 127.5,135.5 128.5,135.5 129.5,135.5 130.5,135.5 131.5,135.5 132.5,135.5 133.5,135.5 134.5,135.5 135.5,135.5 136.5,135.5 137.5,135.5 138.5,135.5 139.5,135.5 140.5,135.5 141.5,135.5 142.5,135.5 143.5,135.5 144.5,135.5 145.5,135.5 146.5,135.5 147.5,135.5 148.5,135.5 149.5,135.5 150.5,135.5 151.5,135.5 152.5,135.5 153.5,135.5 154.5,135.5 155.5,135.5 156.5,135.5 157.5,135.5 158.5,135.5 159.5,135.5 160.5,135.5 161.5,135.5 162.5,135.5 163.5,135.5 164.5,135.5 165.5,135.5 166.5,135.5 167.5,135.5 168.5,135.5 169.5,135.5 170.5,135.5 171.5,135.5 172.5,135.5 173.5,135.5 174.5,135.5 175.5,135.5 176.5,135.5 177.5,135.5 178.5,135.5 179.5,135.5 180.5,135.5 181.5,135.5 182.5,135.5 183.5,135.5 184.5,135.5 185.5,135.5 186.5,135.5 187.5,135.5 188.5,135.5 189.5,135.5 190.5,135.5 191.5,135.5 192.5,135.5 193.5,135.5 194.5,135.5 195.5,135.5 196.5,135.5 197.5,135.5 198.5,135.5 199.5,135.5 200.5,135.5 201.5,135.5 202.5,135.5 203.5,135.5 204.5,135.5 205.5,135.5 206.5,135.5 207.5,135.5 208.5,135.5 209.5,135.5 210.5,135.5 211.5,135.5 212.5,135.5 213.5,135.5 214.5,135.5 215.5,135.5 216.5,135.5 217.5,135.5 218.5,135.5 219.5,135.5 220.5,135.5 221.5,135.5 222.5,135.5 223.5,135.5 224.5,135.5 225.5,135.5 226.5,135.5 227.5,135.5 228.5,135.5 229.5,135.5 230.5,135.5 231.5,135.5 232.5,135.5 233.5,135.5 234.5,135.5 235.5,135.5 236.5,135.5 237.5,135.5 238.5,135.5 239.5,135.5 240.5,135.5 241.5,135.5 242.5,135.5 243.5,135.5 244.5,135.5 245.5,135.5 246.5,135.5 247.5,135.5 248.5,135.5 249.5,135.5 250.5,135.5 251.5,135.5 252.5,135.5 253.5,135.5 254.5,135.5 255.5,135.5 256.5,135.5 257.5,135.5 258.5,135.5 259.5,135.5 260.5,135.5 261.5,135.5 262.5,135.5 263.5,135.5 264.5,135.5 265.5,135.5 266.5,135.5 267.5,135.5 268.5,135.5 269.5,135.5 270.5,135.5 271.5,135.5 272.5,135.5 273.5,135.5 274.5,135.5 275.5,135.5 276.5,135.5 277.5,135.5 278.5,135.5 279.5,135.5 280.5,135.5 281.5,135.5 282.5,135.5 283.5,135.5 284.5,135.5 285.5,135.5 286.5,135.5 287.5,135.5 288.5,135.5 289.5,135.5 290.5,135.5 291.5,135.5 292.5,135.5 293.5,135.5 294.5,135.5 295.5,135.5 296.5,135.5 297.5,135.5 298.5,135.5 299.5,135.5" fill="none" stroke="#f00" stroke-width="1" stroke-linejoin="miter"/></svg></div><div class="gs" style="left:352px;top:673px"><svg width="300" height="150" viewBox="0 0 300 150"><rect width="300" height="150" fill="#fff"/><g font-family='"Liberation Sans", sans-serif' font-size="10" letter-spacing="0.35" fill="#000" text-anchor="middle"><text x="36.5" y="149">7:08:00 PM</text><text x="96.5" y="149">7:09:00 PM</text><text x="156.5" y="149">7:10:00 PM</text><text x="216.5" y="149">7:11:00 PM</text><text x="276.5" y="149">7:12:00 PM</text></g><path d="M36.5,0.5V135.5 M96.5,0.5V135.5 M156.5,0.5V135.5 M216.5,0.5V135.5 M276.5,0.5V135.5 M0.5,0.5H299.5V135.5H0.5Z" fill="none" stroke="#ccc" stroke-width="1"/><polyline points="0.5,135.5 1.5,135.5 2.5,135.5 3.5,135.5 4.5,135.5 5.5,135.5 6.5,135.5 7.5,135.5 8.5,135.5 9.5,135.5 10.5,135.5 11.5,135.5 12.5,135.5 13.5,135.5 14.5,135.5 15.5,135.5 16.5,135.5 17.5,135.5 18.5,135.5 19.5,135.5 20.5,135.5 21.5,135.5 22.5,135.5 23.5,135.5 24.5,135.5 25.5,135.5 26.5,135.5 27.5,135.5 28.5,135.5 29.5,135.5 30.5,135.5 31.5,135.5 32.5,135.5 33.5,135.5 34.5,135.5 35.5,135.5 36.5,135.5 37.5,135.5 38.5,135.5 39.5,135.5 40.5,135.5 41.5,135.5 42.5,135.5 43.5,135.5 44.5,135.5 45.5,135.5 46.5,135.5 47.5,135.5 48.5,135.5 49.5,135.5 50.5,135.5 51.5,135.5 52.5,135.5 53.5,135.5 54.5,135.5 55.5,135.5 56.5,135.5 57.5,135.5 58.5,135.5 59.5,135.5 60.5,135.5 61.5,135.5 62.5,135.5 63.5,135.5 64.5,135.5 65.5,135.5 66.5,135.5 67.5,135.5 68.5,135.5 69.5,135.5 70.5,135.5 71.5,135.5 72.5,135.5 73.5,135.5 74.5,135.5 75.5,135.5 76.5,135.5 77.5,135.5 78.5,135.5 79.5,135.5 80.5,135.5 81.5,135.5 82.5,135.5 83.5,135.5 84.5,135.5 85.5,135.5 86.5,135.5 87.5,135.5 88.5,135.5 89.5,135.5 90.5,135.5 91.5,135.5 92.5,135.5 93.5,135.5 94.5,135.5 95.5,135.5 96.5,135.5 97.5,135.5 98.5,135.5 99.5,135.5 100.5,135.5 101.5,135.5 102.5,135.5 103.5,135.5 104.5,135.5 105.5,135.5 106.5,135.5 107.5,135.5 108.5,135.5 109.5,135.5 110.5,135.5 111.5,135.5 112.5,135.5 113.5,135.5 114.5,135.5 115.5,135.5 116.5,135.5 117.5,135.5 118.5,135.5 119.5,135.5 120.5,135.5 121.5,135.5 122.5,135.5 123.5,135.5 124.5,135.5 125.5,135.5 126.5,135.5 127.5,135.5 128.5,135.5 129.5,135.5 130.5,135.5 131.5,135.5 132.5,135.5 133.5,135.5 134.5,135.5 135.5,135.5 136.5,135.5 137.5,135.5 138.5,135.5 139.5,135.5 140.5,135.5 141.5,135.5 142.5,135.5 143.5,135.5 144.5,135.5 145.5,135.5 146.5,135.5 147.5,135.5 148.5,135.5 149.5,135.5 150.5,135.5 151.5,135.5 152.5,135.5 153.5,135.5 154.5,135.5 155.5,135.5 156.5,135.5 157.5,135.5 158.5,135.5 159.5,135.5 160.5,135.5 161.5,135.5 162.5,135.5 163.5,135.5 164.5,135.5 165.5,135.5 166.5,135.5 167.5,135.5 168.5,135.5 169.5,135.5 170.5,135.5 171.5,135.5 172.5,135.5 173.5,135.5 174.5,135.5 175.5,135.5 176.5,135.5 177.5,135.5 178.5,135.5 179.5,135.5 180.5,135.5 181.5,135.5 182.5,135.5 183.5,135.5 184.5,135.5 185.5,135.5 186.5,135.5 187.5,135.5 188.5,135.5 189.5,135.5 190.5,135.5 191.5,135.5 192.5,135.5 193.5,135.5 194.5,135.5 195.5,135.5 196.5,135.5 197.5,135.5 198.5,135.5 199.5,135.5 200.5,135.5 201.5,135.5 202.5,135.5 203.5,135.5 204.5,135.5 205.5,135.5 206.5,135.5 207.5,135.5 208.5,135.5 209.5,135.5 210.5,135.5 211.5,135.5 212.5,135.5 213.5,135.5 214.5,135.5 215.5,135.5 216.5,135.5 217.5,135.5 218.5,135.5 219.5,135.5 220.5,135.5 221.5,135.5 222.5,135.5 223.5,135.5 224.5,135.5 225.5,135.5 226.5,135.5 227.5,135.5 228.5,135.5 229.5,135.5 230.5,135.5 231.5,135.5 232.5,135.5 233.5,135.5 234.5,135.5 235.5,135.5 236.5,135.5 237.5,135.5 238.5,135.5 239.5,135.5 240.5,135.5 241.5,135.5 242.5,135.5 243.5,135.5 244.5,135.5 245.5,135.5 246.5,135.5 247.5,135.5 248.5,135.5 249.5,135.5 250.5,135.5 251.5,135.5 252.5,135.5 253.5,135.5 254.5,135.5 255.5,135.5 256.5,135.5 257.5,135.5 258.5,135.5 259.5,135.5 260.5,135.5 261.5,135.5 262.5,135.5 263.5,135.5 264.5,135.5 265.5,135.5 266.5,135.5 267.5,135.5 268.5,135.5 269.5,135.5 270.5,135.5 271.5,135.5 272.5,135.5 273.5,135.5 274.5,135.5 275.5,135.5 276.5,135.5 277.5,135.5 278.5,135.5 279.5,135.5 280.5,135.5 281.5,135.5 282.5,135.5 283.5,135.5 284.5,135.5 285.5,135.5 286.5,135.5 287.5,135.5 288.5,135.5 289.5,135.5 290.5,135.5 291.5,135.5 292.5,135.5 293.5,135.5 294.5,135.5 295.5,135.5 296.5,135.5 297.5,135.5 298.5,135.5 299.5,135.5" fill="none" stroke="#f00" stroke-width="1" stroke-linejoin="miter"/></svg></div><div class="gs" style="left:668px;top:673px"><svg width="300" height="150" viewBox="0 0 300 150"><rect width="300" height="150" fill="#fff"/><g font-family='"Liberation Sans", sans-serif' font-size="10" letter-spacing="0.35" fill="#000" text-anchor="middle"><text x="36.5" y="149">7:08:00 PM</text><text x="96.5" y="149">7:09:00 PM</text><text x="156.5" y="149">7:10:00 PM</text><text x="216.5" y="149">7:11:00 PM</text><text x="276.5" y="149">7:12:00 PM</text></g><path d="M36.5,0.5V135.5 M96.5,0.5V135.5 M156.5,0.5V135.5 M216.5,0.5V135.5 M276.5,0.5V135.5 M0.5,0.5H299.5V135.5H0.5Z M299.5,34.5H289.5 M299.5,68.5H289.5 M299.5,102.5H289.5" fill="none" stroke="#ccc" stroke-width="1"/><polyline points="0.5,135.5 1.5,135.5 2.5,135.5 3.5,135.5 4.5,135.5 5.5,135.5 6.5,135.5 7.5,135.5 8.5,135.5 9.5,135.5 10.5,135.5 11.5,135.5 12.5,135.5 13.5,135.5 14.5,135.5 15.5,135.5 16.5,135.5 17.5,135.5 18.5,135.5 19.5,135.5 20.5,135.5 21.5,135.5 22.5,135.5 23.5,135.5 24.5,135.5 25.5,135.5 26.5,135.5 27.5,135.5 28.5,135.5 29.5,135.5 30.5,135.5 31.5,135.5 32.5,135.5 33.5,135.5 34.5,135.5 35.5,135.5 36.5,135.5 37.5,135.5 38.5,135.5 39.5,135.5 40.5,135.5 41.5,135.5 42.5,135.5 43.5,135.5 44.5,135.5 45.5,135.5 46.5,135.5 47.5,135.5 48.5,135.5 49.5,135.5 50.5,135.5 51.5,135.5 52.5,135.5 53.5,135.5 54.5,135.5 55.5,135.5 56.5,135.5 57.5,135.5 58.5,135.5 59.5,135.5 60.5,135.5 61.5,135.5 62.5,135.5 63.5,135.5 64.5,135.5 65.5,135.5 66.5,135.5 67.5,135.5 68.5,135.5 69.5,135.5 70.5,135.5 71.5,135.5 72.5,135.5 73.5,135.5 74.5,135.5 75.5,135.5 76.5,135.5 77.5,135.5 78.5,135.5 79.5,135.5 80.5,135.5 81.5,135.5 82.5,135.5 83.5,135.5 84.5,135.5 85.5,135.5 86.5,135.5 87.5,135.5 88.5,135.5 89.5,135.5 90.5,135.5 91.5,135.5 92.5,135.5 93.5,135.5 94.5,135.5 95.5,135.5 96.5,135.5 97.5,135.5 98.5,135.5 99.5,135.5 100.5,27.5 101.5,27.5 102.5,27.5 103.5,27.5 104.5,27.5 105.5,27.5 106.5,27.5 107.5,27.5 108.5,27.5 109.5,27.5 110.5,27.5 111.5,27.5 112.5,27.5 113.5,27.5 114.5,27.5 115.5,27.5 116.5,27.5 117.5,27.5 118.5,27.5 119.5,27.5 120.5,27.5 121.5,27.5 122.5,27.5 123.5,27.5 124.5,27.5 125.5,27.5 126.5,27.5 127.5,27.5 128.5,27.5 129.5,27.5 130.5,27.5 131.5,27.5 132.5,27.5 133.5,27.5 134.5,27.5 135.5,27.5 136.5,27.5 137.5,27.5 138.5,27.5 139.5,27.5 140.5,27.5 141.5,27.5 142.5,27.5 143.5,27.5 144.5,27.5 145.5,27.5 146.5,27.5 147.5,27.5 148.5,27.5 149.5,27.5 150.5,27.5 151.5,27.5 152.5,27.5 153.5,27.5 154.5,27.5 155.5,27.5 156.5,27.5 157.5,27.5 158.5,27.5 159.5,27.5 160.5,27.5 161.5,27.5 162.5,27.5 163.5,27.5 164.5,27.5 165.5,27.5 166.5,27.5 167.5,27.5 168.5,27.5 169.5,27.5 170.5,27.5 171.5,27.5 172.5,27.5 173.5,27.5 174.5,27.5 175.5,27.5 176.5,27.5 177.5,27.5 178.5,27.5 179.5,27.5 180.5,27.5 181.5,27.5 182.5,27.5 183.5,27.5 184.5,27.5 185.5,27.5 186.5,27.5 187.5,27.5 188.5,27.5 189.5,27.5 190.5,27.5 191.5,27.5 192.5,27.5 193.5,27.5 194.5,27.5 195.5,27.5 196.5,27.5 197.5,27.5 198.5,27.5 199.5,27.5 200.5,27.5 201.5,27.5 202.5,27.5 203.5,27.5 204.5,27.5 205.5,27.5 206.5,27.5 207.5,27.5 208.5,27.5 209.5,27.5 210.5,27.5 211.5,27.5 212.5,27.5 213.5,27.5 214.5,27.5 215.5,27.5 216.5,27.5 217.5,27.5 218.5,27.5 219.5,27.5 220.5,27.5 221.5,27.5 222.5,27.5 223.5,27.5 224.5,27.5 225.5,27.5 226.5,27.5 227.5,27.5 228.5,27.5 229.5,27.5 230.5,27.5 231.5,27.5 232.5,27.5 233.5,27.5 234.5,27.5 235.5,27.5 236.5,27.5 237.5,27.5 238.5,27.5 239.5,27.5 240.5,27.5 241.5,27.5 242.5,27.5 243.5,27.5 244.5,27.5 245.5,27.5 246.5,27.5 247.5,27.5 248.5,27.5 249.5,27.5 250.5,27.5 251.5,27.5 252.5,27.5 253.5,27.5 254.5,27.5 255.5,27.5 256.5,27.5 257.5,27.5 258.5,27.5 259.5,27.5 260.5,27.5 261.5,27.5 262.5,27.5 263.5,27.5 264.5,27.5 265.5,27.5 266.5,27.5 267.5,27.5 268.5,27.5 269.5,27.5 270.5,27.5 271.5,27.5 272.5,27.5 273.5,27.5 274.5,27.5 275.5,27.5 276.5,27.5 277.5,27.5 278.5,27.5 279.5,27.5 280.5,27.5 281.5,27.5 282.5,27.5 283.5,27.5 284.5,27.5 285.5,27.5 286.5,27.5 287.5,27.5 288.5,27.5 289.5,27.5 290.5,27.5 291.5,27.5 292.5,27.5 293.5,27.5 294.5,27.5 295.5,27.5 296.5,27.5 297.5,27.5 298.5,27.5 299.5,27.5" fill="none" stroke="#f00" stroke-width="1" stroke-linejoin="miter"/><g font-family='"Liberation Sans", sans-serif' font-size="10" fill="#000" text-anchor="end"><text x="297.5" y="11">800</text><text x="297.5" y="32.75">600</text><text x="297.5" y="66.50">400</text><text x="297.5" y="100.25">200</text><text x="297.5" y="134.00">0</text></g></svg></div><div class="gs" style="left:984px;top:673px"><svg width="300" height="150" viewBox="0 0 300 150"><rect width="300" height="150" fill="#fff"/><g font-family='"Liberation Sans", sans-serif' font-size="10" letter-spacing="0.35" fill="#000" text-anchor="middle"><text x="36.5" y="149">7:08:00 PM</text><text x="96.5" y="149">7:09:00 PM</text><text x="156.5" y="149">7:10:00 PM</text><text x="216.5" y="149">7:11:00 PM</text><text x="276.5" y="149">7:12:00 PM</text></g><path d="M36.5,0.5V135.5 M96.5,0.5V135.5 M156.5,0.5V135.5 M216.5,0.5V135.5 M276.5,0.5V135.5 M0.5,0.5H299.5V135.5H0.5Z M299.5,27.5H289.5 M299.5,54.5H289.5 M299.5,82.5H289.5 M299.5,109.5H289.5" fill="none" stroke="#ccc" stroke-width="1"/><polyline points="0.5,135.5 1.5,135.5 2.5,135.5 3.5,135.5 4.5,135.5 5.5,135.5 6.5,135.5 7.5,135.5 8.5,135.5 9.5,135.5 10.5,135.5 11.5,135.5 12.5,135.5 13.5,135.5 14.5,135.5 15.5,135.5 16.5,135.5 17.5,135.5 18.5,135.5 19.5,135.5 20.5,135.5 21.5,135.5 22.5,135.5 23.5,135.5 24.5,135.5 25.5,135.5 26.5,135.5 27.5,135.5 28.5,135.5 29.5,135.5 30.5,135.5 31.5,135.5 32.5,135.5 33.5,135.5 34.5,135.5 35.5,135.5 36.5,135.5 37.5,135.5 38.5,135.5 39.5,135.5 40.5,135.5 41.5,135.5 42.5,135.5 43.5,135.5 44.5,135.5 45.5,135.5 46.5,135.5 47.5,135.5 48.5,135.5 49.5,135.5 50.5,135.5 51.5,135.5 52.5,135.5 53.5,135.5 54.5,135.5 55.5,135.5 56.5,135.5 57.5,135.5 58.5,135.5 59.5,135.5 60.5,135.5 61.5,135.5 62.5,135.5 63.5,135.5 64.5,135.5 65.5,135.5 66.5,135.5 67.5,135.5 68.5,135.5 69.5,135.5 70.5,135.5 71.5,135.5 72.5,135.5 73.5,135.5 74.5,135.5 75.5,135.5 76.5,135.5 77.5,135.5 78.5,135.5 79.5,135.5 80.5,135.5 81.5,135.5 82.5,135.5 83.5,135.5 84.5,135.5 85.5,135.5 86.5,135.5 87.5,135.5 88.5,135.5 89.5,135.5 90.5,135.5 91.5,135.5 92.5,135.5 93.5,135.5 94.5,135.5 95.5,135.5 96.5,135.5 97.5,135.5 98.5,135.5 99.5,135.5 100.5,5.5 101.5,5.5 102.5,5.5 103.5,5.5 104.5,5.5 105.5,5.5 106.5,5.5 107.5,5.5 108.5,5.5 109.5,5.5 110.5,5.5 111.5,5.5 112.5,5.5 113.5,5.5 114.5,5.5 115.5,5.5 116.5,5.5 117.5,5.5 118.5,5.5 119.5,5.5 120.5,5.5 121.5,5.5 122.5,5.5 123.5,5.5 124.5,5.5 125.5,5.5 126.5,5.5 127.5,5.5 128.5,5.5 129.5,5.5 130.5,5.5 131.5,5.5 132.5,5.5 133.5,5.5 134.5,5.5 135.5,5.5 136.5,5.5 137.5,5.5 138.5,5.5 139.5,5.5 140.5,5.5 141.5,5.5 142.5,5.5 143.5,5.5 144.5,5.5 145.5,5.5 146.5,5.5 147.5,5.5 148.5,5.5 149.5,5.5 150.5,5.5 151.5,5.5 152.5,5.5 153.5,5.5 154.5,5.5 155.5,5.5 156.5,5.5 157.5,5.5 158.5,5.5 159.5,5.5 160.5,5.5 161.5,5.5 162.5,5.5 163.5,5.5 164.5,5.5 165.5,5.5 166.5,5.5 167.5,5.5 168.5,5.5 169.5,5.5 170.5,5.5 171.5,5.5 172.5,5.5 173.5,5.5 174.5,5.5 175.5,5.5 176.5,5.5 177.5,5.5 178.5,5.5 179.5,5.5 180.5,5.5 181.5,5.5 182.5,5.5 183.5,5.5 184.5,5.5 185.5,5.5 186.5,5.5 187.5,5.5 188.5,5.5 189.5,5.5 190.5,5.5 191.5,5.5 192.5,5.5 193.5,5.5 194.5,5.5 195.5,5.5 196.5,5.5 197.5,5.5 198.5,5.5 199.5,5.5 200.5,5.5 201.5,5.5 202.5,5.5 203.5,5.5 204.5,5.5 205.5,5.5 206.5,5.5 207.5,5.5 208.5,5.5 209.5,5.5 210.5,5.5 211.5,5.5 212.5,5.5 213.5,5.5 214.5,5.5 215.5,5.5 216.5,5.5 217.5,5.5 218.5,5.5 219.5,5.5 220.5,5.5 221.5,5.5 222.5,5.5 223.5,5.5 224.5,5.5 225.5,5.5 226.5,5.5 227.5,5.5 228.5,5.5 229.5,5.5 230.5,5.5 231.5,5.5 232.5,5.5 233.5,5.5 234.5,5.5 235.5,5.5 236.5,5.5 237.5,5.5 238.5,5.5 239.5,5.5 240.5,5.5 241.5,5.5 242.5,5.5 243.5,5.5 244.5,5.5 245.5,5.5 246.5,5.5 247.5,5.5 248.5,5.5 249.5,5.5 250.5,5.5 251.5,5.5 252.5,5.5 253.5,5.5 254.5,5.5 255.5,5.5 256.5,5.5 257.5,5.5 258.5,5.5 259.5,5.5 260.5,5.5 261.5,5.5 262.5,5.5 263.5,5.5 264.5,5.5 265.5,5.5 266.5,5.5 267.5,5.5 268.5,5.5 269.5,5.5 270.5,5.5 271.5,5.5 272.5,5.5 273.5,5.5 274.5,5.5 275.5,5.5 276.5,5.5 277.5,5.5 278.5,5.5 279.5,5.5 280.5,5.5 281.5,5.5 282.5,5.5 283.5,5.5 284.5,5.5 285.5,5.5 286.5,5.5 287.5,5.5 288.5,5.5 289.5,5.5 290.5,5.5 291.5,5.5 292.5,5.5 293.5,5.5 294.5,5.5 295.5,5.5 296.5,5.5 297.5,5.5 298.5,5.5 299.5,5.5" fill="none" stroke="#f00" stroke-width="1" stroke-linejoin="miter"/><g font-family='"Liberation Sans", sans-serif' font-size="10" fill="#000" text-anchor="end"><text x="297.5" y="11">500</text><text x="297.5" y="26.00">400</text><text x="297.5" y="53.00">300</text><text x="297.5" y="80.00">200</text><text x="297.5" y="107.00">100</text><text x="297.5" y="134.00">0</text></g></svg></div><div class="gs" style="left:36px;top:860px"><svg width="300" height="150" viewBox="0 0 300 150"><rect width="300" height="150" fill="#fff"/><g font-family='"Liberation Sans", sans-serif' font-size="10" letter-spacing="0.35" fill="#000" text-anchor="middle"><text x="36.5" y="149">7:08:00 PM</text><text x="96.5" y="149">7:09:00 PM</text><text x="156.5" y="149">7:10:00 PM</text><text x="216.5" y="149">7:11:00 PM</text><text x="276.5" y="149">7:12:00 PM</text></g><path d="M36.5,0.5V135.5 M96.5,0.5V135.5 M156.5,0.5V135.5 M216.5,0.5V135.5 M276.5,0.5V135.5 M0.5,0.5H299.5V135.5H0.5Z M299.5,27.5H289.5 M299.5,54.5H289.5 M299.5,82.5H289.5 M299.5,109.5H289.5" fill="none" stroke="#ccc" stroke-width="1"/><polyline points="0.5,135.5 1.5,135.5 2.5,135.5 3.5,135.5 4.5,135.5 5.5,135.5 6.5,135.5 7.5,135.5 8.5,135.5 9.5,135.5 10.5,135.5 11.5,135.5 12.5,135.5 13.5,135.5 14.5,135.5 15.5,135.5 16.5,135.5 17.5,135.5 18.5,135.5 19.5,135.5 20.5,135.5 21.5,135.5 22.5,135.5 23.5,135.5 24.5,135.5 25.5,135.5 26.5,135.5 27.5,135.5 28.5,135.5 29.5,135.5 30.5,135.5 31.5,135.5 32.5,135.5 33.5,135.5 34.5,135.5 35.5,135.5 36.5,135.5 37.5,135.5 38.5,135.5 39.5,135.5 40.5,135.5 41.5,135.5 42.5,135.5 43.5,135.5 44.5,135.5 45.5,135.5 46.5,135.5 47.5,135.5 48.5,135.5 49.5,135.5 50.5,135.5 51.5,135.5 52.5,135.5 53.5,135.5 54.5,135.5 55.5,135.5 56.5,135.5 57.5,135.5 58.5,135.5 59.5,135.5 60.5,135.5 61.5,135.5 62.5,135.5 63.5,135.5 64.5,135.5 65.5,135.5 66.5,135.5 67.5,135.5 68.5,135.5 69.5,135.5 70.5,135.5 71.5,135.5 72.5,135.5 73.5,135.5 74.5,135.5 75.5,135.5 76.5,135.5 77.5,135.5 78.5,135.5 79.5,135.5 80.5,135.5 81.5,135.5 82.5,135.5 83.5,135.5 84.5,135.5 85.5,135.5 86.5,135.5 87.5,135.5 88.5,135.5 89.5,135.5 90.5,135.5 91.5,135.5 92.5,135.5 93.5,135.5 94.5,135.5 95.5,135.5 96.5,135.5 97.5,135.5 98.5,135.5 99.5,135.5 100.5,22.5 101.5,22.5 102.5,32.5 103.5,27.5 104.5,22.5 105.5,32.5 106.5,27.5 107.5,22.5 108.5,32.5 109.5,27.5 110.5,27.5 111.5,27.5 112.5,27.5 113.5,27.5 114.5,27.5 115.5,22.5 116.5,32.5 117.5,27.5 118.5,22.5 119.5,32.5 120.5,27.5 121.5,22.5 122.5,32.5 123.5,27.5 124.5,22.5 125.5,32.5 126.5,27.5 127.5,27.5 128.5,27.5 129.5,27.5 130.5,27.5 131.5,27.5 132.5,27.5 133.5,22.5 134.5,32.5 135.5,27.5 136.5,22.5 137.5,32.5 138.5,27.5 139.5,22.5 140.5,32.5 141.5,27.5 142.5,27.5 143.5,27.5 144.5,27.5 145.5,27.5 146.5,22.5 147.5,27.5 148.5,27.5 149.5,27.5 150.5,27.5 151.5,32.5 152.5,27.5 153.5,27.5 154.5,27.5 155.5,27.5 156.5,27.5 157.5,27.5 158.5,27.5 159.5,27.5 160.5,27.5 161.5,27.5 162.5,27.5 163.5,27.5 164.5,27.5 165.5,27.5 166.5,22.5 167.5,32.5 168.5,27.5 169.5,22.5 170.5,32.5 171.5,27.5 172.5,22.5 173.5,32.5 174.5,27.5 175.5,27.5 176.5,22.5 177.5,32.5 178.5,27.5 179.5,22.5 180.5,27.5 181.5,32.5 182.5,27.5 183.5,27.5 184.5,27.5 185.5,27.5 186.5,27.5 187.5,27.5 188.5,27.5 189.5,27.5 190.5,27.5 191.5,27.5 192.5,27.5 193.5,22.5 194.5,32.5 195.5,27.5 196.5,22.5 197.5,27.5 198.5,32.5 199.5,27.5 200.5,27.5 201.5,27.5 202.5,27.5 203.5,27.5 204.5,27.5 205.5,27.5 206.5,27.5 207.5,22.5 208.5,27.5 209.5,27.5 210.5,32.5 211.5,27.5 212.5,27.5 213.5,27.5 214.5,27.5 215.5,27.5 216.5,27.5 217.5,27.5 218.5,27.5 219.5,27.5 220.5,27.5 221.5,27.5 222.5,27.5 223.5,27.5 224.5,27.5 225.5,27.5 226.5,27.5 227.5,22.5 228.5,32.5 229.5,27.5 230.5,22.5 231.5,32.5 232.5,27.5 233.5,22.5 234.5,32.5 235.5,27.5 236.5,22.5 237.5,27.5 238.5,32.5 239.5,27.5 240.5,22.5 241.5,27.5 242.5,32.5 243.5,27.5 244.5,22.5 245.5,27.5 246.5,32.5 247.5,27.5 248.5,27.5 249.5,27.5 250.5,27.5 251.5,27.5 252.5,27.5 253.5,27.5 254.5,27.5 255.5,27.5 256.5,27.5 257.5,27.5 258.5,27.5 259.5,27.5 260.5,22.5 261.5,32.5 262.5,27.5 263.5,22.5 264.5,27.5 265.5,32.5 266.5,27.5 267.5,22.5 268.5,32.5 269.5,27.5 270.5,22.5 271.5,27.5 272.5,32.5 273.5,27.5 274.5,27.5 275.5,27.5 276.5,27.5 277.5,27.5 278.5,27.5 279.5,27.5 280.5,27.5 281.5,27.5 282.5,27.5 283.5,27.5 284.5,22.5 285.5,32.5 286.5,27.5 287.5,22.5 288.5,32.5 289.5,27.5 290.5,27.5 291.5,27.5 292.5,27.5 293.5,27.5 294.5,27.5 295.5,27.5 296.5,27.5 297.5,27.5 298.5,27.5 299.5,32.5" fill="none" stroke="#f00" stroke-width="1" stroke-linejoin="miter"/><g font-family='"Liberation Sans", sans-serif' font-size="10" fill="#000" text-anchor="end"><text x="297.5" y="11">25</text><text x="297.5" y="26.00">20</text><text x="297.5" y="53.00">15</text><text x="297.5" y="80.00">10</text><text x="297.5" y="107.00">5</text><text x="297.5" y="134.00">0</text></g></svg></div><div class="gs" style="left:352px;top:860px"><svg width="300" height="150" viewBox="0 0 300 150"><rect width="300" height="150" fill="#fff"/><g font-family='"Liberation Sans", sans-serif' font-size="10" letter-spacing="0.35" fill="#000" text-anchor="middle"><text x="36.5" y="149">7:08:00 PM</text><text x="96.5" y="149">7:09:00 PM</text><text x="156.5" y="149">7:10:00 PM</text><text x="216.5" y="149">7:11:00 PM</text><text x="276.5" y="149">7:12:00 PM</text></g><path d="M36.5,0.5V135.5 M96.5,0.5V135.5 M156.5,0.5V135.5 M216.5,0.5V135.5 M276.5,0.5V135.5 M0.5,0.5H299.5V135.5H0.5Z M299.5,27.5H289.5 M299.5,54.5H289.5 M299.5,82.5H289.5 M299.5,109.5H289.5" fill="none" stroke="#ccc" stroke-width="1"/><polyline points="0.5,135.5 1.5,135.5 2.5,135.5 3.5,135.5 4.5,135.5 5.5,135.5 6.5,135.5 7.5,135.5 8.5,135.5 9.5,135.5 10.5,135.5 11.5,135.5 12.5,135.5 13.5,135.5 14.5,135.5 15.5,135.5 16.5,135.5 17.5,135.5 18.5,135.5 19.5,135.5 20.5,135.5 21.5,135.5 22.5,135.5 23.5,135.5 24.5,135.5 25.5,135.5 26.5,135.5 27.5,135.5 28.5,135.5 29.5,135.5 30.5,135.5 31.5,135.5 32.5,135.5 33.5,135.5 34.5,135.5 35.5,135.5 36.5,135.5 37.5,135.5 38.5,135.5 39.5,135.5 40.5,135.5 41.5,135.5 42.5,135.5 43.5,135.5 44.5,135.5 45.5,135.5 46.5,135.5 47.5,135.5 48.5,135.5 49.5,135.5 50.5,135.5 51.5,135.5 52.5,135.5 53.5,135.5 54.5,135.5 55.5,135.5 56.5,135.5 57.5,135.5 58.5,135.5 59.5,135.5 60.5,135.5 61.5,135.5 62.5,135.5 63.5,135.5 64.5,135.5 65.5,135.5 66.5,135.5 67.5,135.5 68.5,135.5 69.5,135.5 70.5,135.5 71.5,135.5 72.5,135.5 73.5,135.5 74.5,135.5 75.5,135.5 76.5,135.5 77.5,135.5 78.5,135.5 79.5,135.5 80.5,135.5 81.5,135.5 82.5,135.5 83.5,135.5 84.5,135.5 85.5,135.5 86.5,135.5 87.5,135.5 88.5,135.5 89.5,135.5 90.5,135.5 91.5,135.5 92.5,135.5 93.5,135.5 94.5,135.5 95.5,135.5 96.5,135.5 97.5,135.5 98.5,135.5 99.5,135.5 100.5,22.5 101.5,22.5 102.5,27.5 103.5,27.5 104.5,27.5 105.5,27.5 106.5,27.5 107.5,22.5 108.5,27.5 109.5,27.5 110.5,27.5 111.5,27.5 112.5,27.5 113.5,22.5 114.5,27.5 115.5,27.5 116.5,27.5 117.5,27.5 118.5,27.5 119.5,27.5 120.5,27.5 121.5,27.5 122.5,27.5 123.5,27.5 124.5,27.5 125.5,27.5 126.5,22.5 127.5,27.5 128.5,27.5 129.5,27.5 130.5,27.5 131.5,27.5 132.5,27.5 133.5,27.5 134.5,27.5 135.5,27.5 136.5,27.5 137.5,27.5 138.5,27.5 139.5,27.5 140.5,27.5 141.5,27.5 142.5,27.5 143.5,27.5 144.5,27.5 145.5,27.5 146.5,27.5 147.5,27.5 148.5,27.5 149.5,27.5 150.5,27.5 151.5,27.5 152.5,27.5 153.5,27.5 154.5,27.5 155.5,27.5 156.5,27.5 157.5,27.5 158.5,27.5 159.5,27.5 160.5,27.5 161.5,27.5 162.5,27.5 163.5,32.5 164.5,27.5 165.5,22.5 166.5,27.5 167.5,27.5 168.5,27.5 169.5,27.5 170.5,27.5 171.5,27.5 172.5,27.5 173.5,27.5 174.5,27.5 175.5,27.5 176.5,22.5 177.5,27.5 178.5,27.5 179.5,32.5 180.5,27.5 181.5,27.5 182.5,27.5 183.5,27.5 184.5,27.5 185.5,27.5 186.5,27.5 187.5,27.5 188.5,27.5 189.5,27.5 190.5,22.5 191.5,27.5 192.5,27.5 193.5,27.5 194.5,27.5 195.5,27.5 196.5,22.5 197.5,27.5 198.5,27.5 199.5,27.5 200.5,27.5 201.5,32.5 202.5,27.5 203.5,27.5 204.5,22.5 205.5,27.5 206.5,32.5 207.5,27.5 208.5,27.5 209.5,22.5 210.5,27.5 211.5,27.5 212.5,27.5 213.5,27.5 214.5,27.5 215.5,27.5 216.5,27.5 217.5,27.5 218.5,27.5 219.5,27.5 220.5,27.5 221.5,27.5 222.5,27.5 223.5,27.5 224.5,27.5 225.5,27.5 226.5,27.5 227.5,27.5 228.5,27.5 229.5,27.5 230.5,27.5 231.5,27.5 232.5,27.5 233.5,27.5 234.5,27.5 235.5,32.5 236.5,27.5 237.5,22.5 238.5,27.5 239.5,32.5 240.5,27.5 241.5,27.5 242.5,27.5 243.5,22.5 244.5,27.5 245.5,27.5 246.5,27.5 247.5,27.5 248.5,27.5 249.5,27.5 250.5,27.5 251.5,27.5 252.5,27.5 253.5,27.5 254.5,27.5 255.5,27.5 256.5,27.5 257.5,38.5 258.5,27.5 259.5,27.5 260.5,27.5 261.5,27.5 262.5,27.5 263.5,27.5 264.5,27.5 265.5,27.5 266.5,27.5 267.5,27.5 268.5,27.5 269.5,27.5 270.5,27.5 271.5,27.5 272.5,27.5 273.5,27.5 274.5,32.5 275.5,27.5 276.5,27.5 277.5,22.5 278.5,27.5 279.5,27.5 280.5,32.5 281.5,27.5 282.5,27.5 283.5,22.5 284.5,27.5 285.5,32.5 286.5,27.5 287.5,22.5 288.5,27.5 289.5,27.5 290.5,27.5 291.5,27.5 292.5,27.5 293.5,38.5 294.5,27.5 295.5,27.5 296.5,32.5 297.5,27.5 298.5,32.5 299.5,27.5" fill="none" stroke="#f00" stroke-width="1" stroke-linejoin="miter"/><g font-family='"Liberation Sans", sans-serif' font-size="10" fill="#000" text-anchor="end"><text x="297.5" y="11">25</text><text x="297.5" y="26.00">20</text><text x="297.5" y="53.00">15</text><text x="297.5" y="80.00">10</text><text x="297.5" y="107.00">5</text><text x="297.5" y="134.00">0</text></g></svg></div><div class="gs" style="left:668px;top:860px"><svg width="300" height="150" viewBox="0 0 300 150"><rect width="300" height="150" fill="#fff"/><g font-family='"Liberation Sans", sans-serif' font-size="10" letter-spacing="0.35" fill="#000" text-anchor="middle"><text x="36.5" y="149">7:08:00 PM</text><text x="96.5" y="149">7:09:00 PM</text><text x="156.5" y="149">7:10:00 PM</text><text x="216.5" y="149">7:11:00 PM</text><text x="276.5" y="149">7:12:00 PM</text></g><path d="M36.5,0.5V135.5 M96.5,0.5V135.5 M156.5,0.5V135.5 M216.5,0.5V135.5 M276.5,0.5V135.5 M0.5,0.5H299.5V135.5H0.5Z M299.5,45.5H289.5 M299.5,91.5H289.5" fill="none" stroke="#ccc" stroke-width="1"/><polyline points="0.5,135.5 1.5,135.5 2.5,135.5 3.5,135.5 4.5,135.5 5.5,135.5 6.5,135.5 7.5,135.5 8.5,135.5 9.5,135.5 10.5,135.5 11.5,135.5 12.5,135.5 13.5,135.5 14.5,135.5 15.5,135.5 16.5,135.5 17.5,135.5 18.5,135.5 19.5,135.5 20.5,135.5 21.5,135.5 22.5,135.5 23.5,135.5 24.5,135.5 25.5,135.5 26.5,135.5 27.5,135.5 28.5,135.5 29.5,135.5 30.5,135.5 31.5,135.5 32.5,135.5 33.5,135.5 34.5,135.5 35.5,135.5 36.5,135.5 37.5,135.5 38.5,135.5 39.5,135.5 40.5,135.5 41.5,135.5 42.5,135.5 43.5,135.5 44.5,135.5 45.5,135.5 46.5,135.5 47.5,135.5 48.5,135.5 49.5,135.5 50.5,135.5 51.5,135.5 52.5,135.5 53.5,135.5 54.5,135.5 55.5,135.5 56.5,135.5 57.5,135.5 58.5,135.5 59.5,135.5 60.5,135.5 61.5,135.5 62.5,135.5 63.5,135.5 64.5,135.5 65.5,135.5 66.5,135.5 67.5,135.5 68.5,135.5 69.5,135.5 70.5,135.5 71.5,135.5 72.5,135.5 73.5,135.5 74.5,135.5 75.5,135.5 76.5,135.5 77.5,135.5 78.5,135.5 79.5,135.5 80.5,135.5 81.5,135.5 82.5,135.5 83.5,135.5 84.5,135.5 85.5,135.5 86.5,135.5 87.5,135.5 88.5,135.5 89.5,135.5 90.5,135.5 91.5,135.5 92.5,135.5 93.5,135.5 94.5,135.5 95.5,135.5 96.5,135.5 97.5,135.5 98.5,135.5 99.5,135.5 100.5,0.5 101.5,160.5 102.5,160.5 103.5,160.5 104.5,160.5 105.5,160.5 106.5,160.5 107.5,160.5 108.5,160.5 109.5,160.5 110.5,160.5 111.5,160.5 112.5,160.5 113.5,160.5 114.5,160.5 115.5,160.5 116.5,160.5 117.5,160.5 118.5,160.5 119.5,160.5 120.5,160.5 121.5,160.5 122.5,160.5 123.5,160.5 124.5,160.5 125.5,160.5 126.5,160.5 127.5,160.5 128.5,160.5 129.5,160.5 130.5,160.5 131.5,160.5 132.5,160.5 133.5,160.5 134.5,160.5 135.5,160.5 136.5,160.5 137.5,160.5 138.5,160.5 139.5,160.5 140.5,160.5 141.5,160.5 142.5,160.5 143.5,160.5 144.5,160.5 145.5,160.5 146.5,160.5 147.5,160.5 148.5,160.5 149.5,160.5 150.5,160.5 151.5,160.5 152.5,160.5 153.5,160.5 154.5,160.5 155.5,160.5 156.5,160.5 157.5,160.5 158.5,160.5 159.5,160.5 160.5,160.5 161.5,160.5 162.5,160.5 163.5,160.5 164.5,160.5 165.5,160.5 166.5,160.5 167.5,160.5 168.5,160.5 169.5,160.5 170.5,160.5 171.5,160.5 172.5,160.5 173.5,160.5 174.5,160.5 175.5,160.5 176.5,160.5 177.5,160.5 178.5,160.5 179.5,160.5 180.5,160.5 181.5,160.5 182.5,160.5 183.5,160.5 184.5,160.5 185.5,160.5 186.5,160.5 187.5,160.5 188.5,160.5 189.5,160.5 190.5,160.5 191.5,160.5 192.5,160.5 193.5,160.5 194.5,160.5 195.5,160.5 196.5,160.5 197.5,160.5 198.5,160.5 199.5,160.5 200.5,160.5 201.5,160.5 202.5,160.5 203.5,160.5 204.5,160.5 205.5,160.5 206.5,160.5 207.5,160.5 208.5,160.5 209.5,160.5 210.5,160.5 211.5,160.5 212.5,160.5 213.5,160.5 214.5,160.5 215.5,160.5 216.5,160.5 217.5,160.5 218.5,160.5 219.5,160.5 220.5,160.5 221.5,160.5 222.5,160.5 223.5,160.5 224.5,160.5 225.5,160.5 226.5,160.5 227.5,160.5 228.5,160.5 229.5,160.5 230.5,160.5 231.5,160.5 232.5,160.5 233.5,160.5 234.5,160.5 235.5,160.5 236.5,160.5 237.5,160.5 238.5,160.5 239.5,160.5 240.5,160.5 241.5,160.5 242.5,160.5 243.5,160.5 244.5,160.5 245.5,160.5 246.5,160.5 247.5,160.5 248.5,160.5 249.5,160.5 250.5,160.5 251.5,160.5 252.5,160.5 253.5,160.5 254.5,160.5 255.5,160.5 256.5,160.5 257.5,160.5 258.5,160.5 259.5,160.5 260.5,160.5 261.5,160.5 262.5,160.5 263.5,160.5 264.5,160.5 265.5,160.5 266.5,160.5 267.5,160.5 268.5,160.5 269.5,160.5 270.5,160.5 271.5,160.5 272.5,160.5 273.5,160.5 274.5,160.5 275.5,160.5 276.5,160.5 277.5,160.5 278.5,160.5 279.5,160.5 280.5,160.5 281.5,160.5 282.5,160.5 283.5,160.5 284.5,160.5 285.5,160.5 286.5,160.5 287.5,160.5 288.5,160.5 289.5,160.5 290.5,160.5 291.5,160.5 292.5,160.5 293.5,160.5 294.5,160.5 295.5,160.5 296.5,160.5 297.5,160.5 298.5,160.5 299.5,160.5" fill="none" stroke="#f00" stroke-width="1" stroke-linejoin="miter"/><g font-family='"Liberation Sans", sans-serif' font-size="10" fill="#000" text-anchor="end"><text x="297.5" y="11">15</text><text x="297.5" y="44.00">10</text><text x="297.5" y="89.00">5</text><text x="297.5" y="134.00">0</text></g></svg></div><svg class="abs" style="left:0;top:0" width="1578" height="907"><g font-family='"Liberation Sans", sans-serif' fill="#000"><text x="36" y="109" font-size="16.69">bitsReceivedPerSecond</text><text x="352" y="109" font-size="16.60">packetsReceivedPerSecond</text><text x="668" y="109" font-size="17.41">packetsLost</text><text x="984" y="109" font-size="17.14">googFirsSent</text><text x="36" y="296" font-size="16.93">googNacksSent</text><text x="352" y="296" font-size="16.93">googFrameWidthReceived</text><text x="668" y="296" font-size="17.06">googFrameHeightReceived</text><text x="984" y="296" font-size="16.75">googFrameRateReceived</text><text x="36" y="483" font-size="17.01">googFrameRateDecoded</text><text x="352" y="483" font-size="17.21">googFrameRateOutput</text><text x="668" y="483" font-size="16.78">bitsSentPerSecond</text><text x="984" y="483" font-size="16.57">packetsSentPerSecond</text><text x="36" y="670" font-size="16.88">googFirsReceived</text><text x="352" y="670" font-size="16.75">googNacksReceived</text><text x="668" y="670" font-size="17.01">googFrameWidthSent</text><text x="984" y="670" font-size="17.18">googFrameHeightSent</text><text x="36" y="857" font-size="17.18">googFrameRateInput</text><text x="352" y="857" font-size="16.75">googFrameRateSent</text><text x="668" y="857" font-size="17.85">googRtt</text></g></svg></div><div class="abs" style="left:0;top:980px;width:1578px;height:1px;background:#9a9a9a"></div><div class="abs" style="left:0;top:981px;width:1578px;height:43px;background:linear-gradient(#f2f2f2,#dcdcdc)"></div></div><svg style="position:absolute;left:0;top:0" width="1692" height="1138"><defs><linearGradient id="strip" x1="0" y1="0" x2="0" y2="1"><stop offset="0" stop-color="#e9e9e9"/><stop offset="1" stop-color="#cfcfcf"/></linearGradient><linearGradient id="itab" x1="0" y1="0" x2="0" y2="1"><stop offset="0" stop-color="#e1e1e1"/><stop offset="1" stop-color="#cdcdcd"/></linearGradient><linearGradient id="atab" x1="0" y1="0" x2="0" y2="1"><stop offset="0" stop-color="#f2f2f2"/><stop offset="1" stop-color="#ececec"/></linearGradient><linearGradient id="tool" x1="0" y1="0" x2="0" y2="1"><stop offset="0" stop-color="#ececec"/><stop offset="1" stop-color="#e3e3e3"/></linearGradient><linearGradient id="nt" x1="0" y1="0" x2="0" y2="1"><stop offset="0" stop-color="#dedede"/><stop offset="1" stop-color="#d0d0d0"/></linearGradient></defs><path d="M327,70.5 L336.4,50.0 Q338,46.5 341,46.5 L517,46.5 Q520,46.5 521.6,50.0 L531,70.5 Z" fill="url(#itab)"/><path d="M327,70.5 L336.4,50.0 Q338,46.5 341,46.5 L517,46.5 Q520,46.5 521.6,50.0 L531,70.5" fill="none" stroke="#8f8f8f" stroke-width="1"/><path d="M132,70.5 L141.4,50.0 Q143,46.5 146,46.5 L322,46.5 Q325,46.5 326.6,50.0 L336,70.5 Z" fill="url(#itab)"/><path d="M132,70.5 L141.4,50.0 Q143,46.5 146,46.5 L322,46.5 Q325,46.5 326.6,50.0 L336,70.5" fill="none" stroke="#8f8f8f" stroke-width="1"/><path d="M725,51.5 H748.5 Q750,51.5 751,53.5 L755.5,64.5 Q756,66.5 754,66.5 H733 Q731.5,66.5 730.5,64.5 L724.5,53 Q724,51.5 725,51.5Z" fill="url(#nt)" stroke="#8f8f8f" stroke-width="1"/><path d="M57,70.5H522.5M726.5,70.5H1635" stroke="#a3a3a3" stroke-width="1"/><path d="M522,70.5 L531.4,50.0 Q533,46.5 536,46.5 L712,46.5 Q715,46.5 716.6,50.0 L726,70.5 V72 H522 Z" fill="url(#atab)"/><rect x="518" y="70" width="212" height="2" fill="#ececec"/><path d="M522,70.5 L531.4,50.0 Q533,46.5 536,46.5 L712,46.5 Q715,46.5 716.6,50.0 L726,70.5" fill="none" stroke="#8f8f8f" stroke-width="1"/><path d="M313.8,55.8L320.2,62.2M320.2,55.8L313.8,62.2" stroke="#6e6e6e" stroke-width="1.35" fill="none"/><path d="M508.8,55.8L515.2,62.2M515.2,55.8L508.8,62.2" stroke="#6e6e6e" stroke-width="1.35" fill="none"/><path d="M703.8,55.8L710.2,62.2M710.2,55.8L703.8,62.2" stroke="#6e6e6e" stroke-width="1.35" fill="none"/><g fill="none" stroke-width="2.6" stroke-linecap="butt"><path d="M151.8,52.6 Q149,55 147.6,58.3" stroke="#b8652e"/><path d="M147.6,58.3 Q149.5,62 152.8,64.4" stroke="#4c9bd9"/><path d="M156.2,52.6 Q159.5,55 161,58.3" stroke="#767676"/><path d="M161,58.3 Q159.5,62 156.2,64.4" stroke="#d9a060"/></g><path d="M344.5,52.5H350.5L354.5,56.5V65.5H344.5Z" fill="#fff" stroke="#8a8a8a" stroke-width="1"/><path d="M350.5,52.5V56.5H354.5" fill="none" stroke="#8a8a8a" stroke-width="1"/><circle cx="352" cy="62" r="4" fill="#cfcfcf" stroke="#bdbdbd" stroke-width="0.6"/><circle cx="352.5" cy="64" r="0.8" fill="#f08080"/><path d="M539.5,52.5H545.5L549.5,56.5V65.5H539.5Z" fill="#fff" stroke="#8a8a8a" stroke-width="1"/><path d="M545.5,52.5V56.5H549.5" fill="none" stroke="#8a8a8a" stroke-width="1"/><defs><radialGradient id="tlr" cx="0.5" cy="0.75" r="0.7"><stop offset="0" stop-color="#ffb3b3"/><stop offset="0.6" stop-color="#f7333a"/><stop offset="1" stop-color="#e81e25"/></radialGradient><radialGradient id="tlo" cx="0.5" cy="0.7" r="0.7"><stop offset="0" stop-color="#f8dcae"/><stop offset="0.6" stop-color="#f0c98e"/><stop offset="1" stop-color="#d99a4e"/></radialGradient><radialGradient id="tlg" cx="0.5" cy="0.7" r="0.7"><stop offset="0" stop-color="#b6e29a"/><stop offset="1" stop-color="#90d078"/></radialGradient></defs><circle cx="75" cy="54" r="5.6" fill="url(#tlr)" stroke="#7d3b2c" stroke-width="1.1"/><ellipse cx="75" cy="50.3" rx="2.2" ry="1" fill="#fff" opacity="0.55"/><circle cx="95" cy="54" r="5.6" fill="url(#tlo)" stroke="#a8702e" stroke-width="1.1"/><ellipse cx="95" cy="50.3" rx="2.2" ry="1" fill="#fff" opacity="0.55"/><circle cx="115" cy="54" r="5.6" fill="url(#tlg)" stroke="#5e5e5e" stroke-width="1.1"/><ellipse cx="115" cy="50.3" rx="2.2" ry="1" fill="#fff" opacity="0.55"/></svg><svg style="position:absolute;left:1609px;top:43px" width="18" height="18"><g fill="#8c8c8c"><path d="M9,2 H16 V9 L13.8,6.8 L11.2,9.4 L8.6,6.8 L11.2,4.2Z"/><path d="M2,9 V16 H9 L6.8,13.8 L9.4,11.2 L6.8,8.6 L4.2,11.2Z"/></g></svg><svg class="abs" style="left:0;top:0" width="1692" height="120"><path d="M74,82.8 L68.3,88.3 L74,93.9 M68.5,88.3 H81.5" fill="none" stroke="#575757" stroke-width="2.6" stroke-linecap="round" stroke-linejoin="round"/><path d="M103,82.8 L108.6,88.3 L103,93.9 M108.4,88.3 H95.5" fill="none" stroke="#c6c6c6" stroke-width="2.3" stroke-linecap="round" stroke-linejoin="round"/><path d="M134.8,84.2 A6.2,6.2 0 1 0 135.6,91.2" fill="none" stroke="#575757" stroke-width="2.6" stroke-linecap="round"/><path d="M138,81 V87.8 H131.2Z" fill="#575757"/><rect x="148.5" y="76.5" width="1450" height="25" rx="2.5" ry="2.5" fill="#fff" stroke="#a9a9a9" stroke-width="1"/><path d="M151,102.5H1596" stroke="#ececec" stroke-width="1"/><path d="M157.5,81.5H163.5L167.5,85.5V95.5H157.5Z" fill="#fbfbfb" stroke="#7a7a7a" stroke-width="1"/><path d="M163.5,81.5V85.5H167.5" fill="none" stroke="#7a7a7a" stroke-width="1"/><polygon points="1585.50,79.40 1587.79,85.44 1594.25,85.76 1589.21,89.81 1590.91,96.04 1585.50,92.50 1580.09,96.04 1581.79,89.81 1576.75,85.76 1583.21,85.44" fill="#fff" stroke="#6f6f6f" stroke-width="1.1" stroke-linejoin="round"/><path d="M1611,83.5H1624M1611,88.5H1624M1611,93.5H1624" stroke="#5e5e5e" stroke-width="2.2" stroke-linecap="round"/></svg><div class="t" style="left:176px;top:80px;font-size:16.6px;color:#000"><span style="color:#6a6a6a">chrome://</span>webrtc-internals</div><div class="t" style="left:164px;top:54px;font-size:11.4px;color:#000">WebRTC</div><div class="t" style="left:359px;top:54px;font-size:11.4px;color:#000">WebRTC Reference App</div><div class="t" style="left:554px;top:54px;font-size:11.4px;color:#000">WebRTC Internals</div><svg class="abs" style="left:0;top:1000px" width="1692" height="70"><defs><linearGradient id="btn" x1="0" y1="0" x2="0" y2="1"><stop offset="0" stop-color="#f6f6f6"/><stop offset="1" stop-color="#e4e4e4"/></linearGradient></defs><rect x="61.5" y="20.5" width="205" height="31" rx="3" fill="url(#btn)" stroke="#bdbdbd"/><path d="M252.5,22V50" stroke="#c4c4c4"/><path d="M255.5,32.5H262.5L259,36.5Z" fill="#333"/><path d="M73.5,28.5H80.5L84.5,32.5V43.5H73.5Z" fill="#fff" stroke="#9a9a9a" stroke-width="1"/><path d="M80.5,28.5V32.5H84.5" fill="none" stroke="#9a9a9a" stroke-width="1"/><circle cx="78.5" cy="37" r="3" fill="#5b8fc9"/><path d="M76,38.5 L80.5,34.5" stroke="#333" stroke-width="1"/><rect x="1516.5" y="20.5" width="89" height="31" rx="3" fill="url(#btn)" stroke="#bdbdbd"/><path d="M1533,30 H1538.5 V35.5 H1541.5 L1535.75,41.5 L1530,35.5 H1533Z" fill="#6a6a6a"/><path d="M1616.8,32.3L1623.2,38.7M1623.2,32.3L1616.8,38.7" stroke="#7a7a7a" stroke-width="1.35" fill="none"/></svg><div class="t" style="left:98px;top:1030px;font-size:12px;color:#111">vidtel_logo.png</div><div class="t" style="left:1548px;top:1030px;font-size:11.6px;color:#111">Show All</div></body></html>
